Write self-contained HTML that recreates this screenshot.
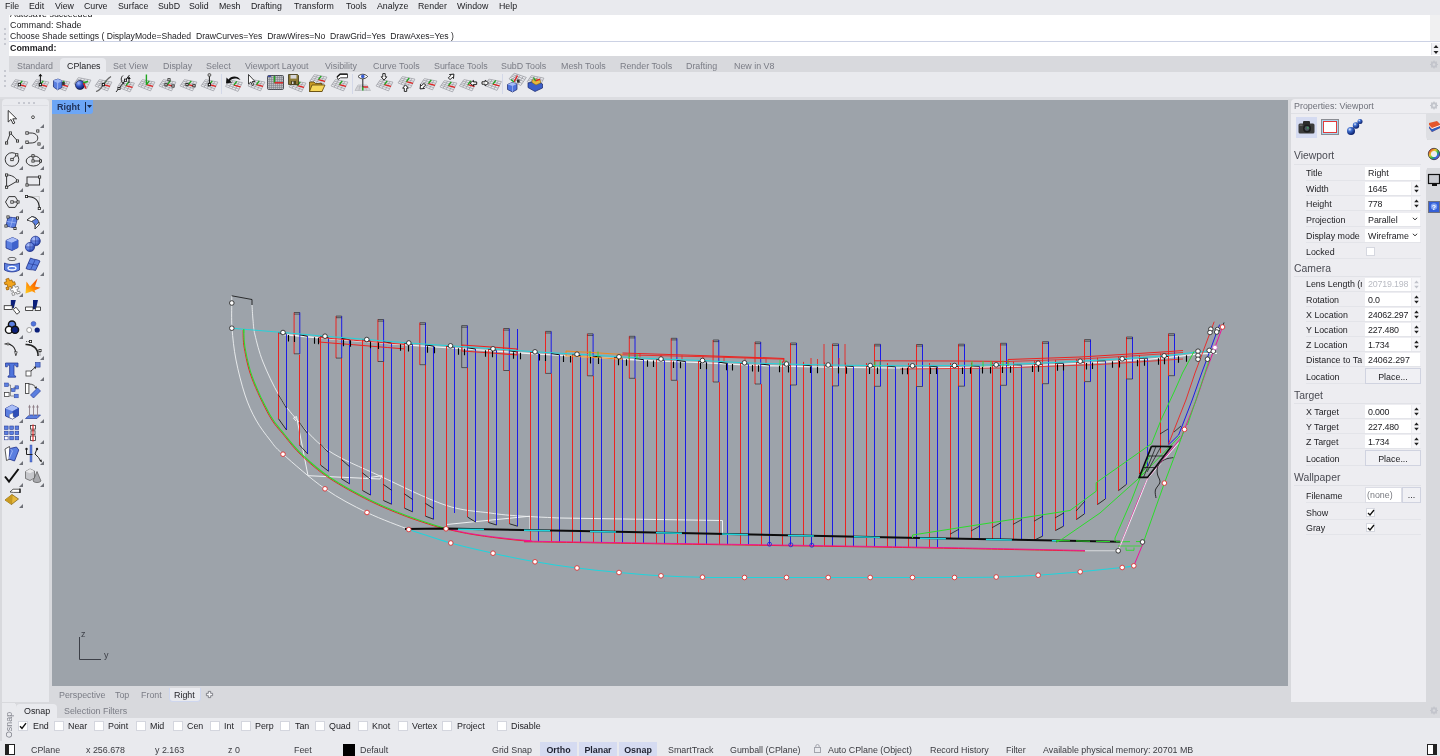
<!DOCTYPE html>
<html><head><meta charset="utf-8"><title>Rhino</title>
<style>
*{box-sizing:border-box;margin:0;padding:0}
html,body{width:1440px;height:756px;overflow:hidden}
body{font-family:"Liberation Sans",sans-serif;font-size:9px;color:#1c1c1f;background:#e9eaee;position:relative}
.a{position:absolute;white-space:nowrap}
.t{position:absolute;white-space:nowrap;line-height:12px;height:12px}
.g{color:#75777f}
.cb{position:absolute;width:10px;height:10px;background:#fff;border:1px solid #d4d6de}
svg{position:absolute;overflow:visible}
</style></head><body>
<div id="wrap" style="position:absolute;left:0;top:0;width:1440px;height:756px;overflow:hidden;will-change:transform">
<!-- menu -->
<div class="a" style="left:0;top:0;width:1440px;height:15px;background:#e9eaee"></div>
<div class="t" style="left:5px;top:0px;font-size:8.8px;color:#1a1a1e;word-spacing:0" id="menu">
<span class="a" style="left:0">File</span><span class="a" style="left:24px">Edit</span><span class="a" style="left:50px">View</span><span class="a" style="left:79px">Curve</span><span class="a" style="left:113px">Surface</span><span class="a" style="left:153px">SubD</span><span class="a" style="left:184px">Solid</span><span class="a" style="left:214px">Mesh</span><span class="a" style="left:246px">Drafting</span><span class="a" style="left:289px">Transform</span><span class="a" style="left:341px">Tools</span><span class="a" style="left:372px">Analyze</span><span class="a" style="left:413px">Render</span><span class="a" style="left:452px">Window</span><span class="a" style="left:494px">Help</span>
</div>
<!-- command area -->
<div class="a" style="left:9px;top:15px;width:1421px;height:27px;background:#fff;overflow:hidden">
 <div class="t" style="left:1px;top:-7px;font-size:8.9px">Autosave succeeded</div>
 <div class="t" style="left:1px;top:4px;font-size:8.9px">Command: Shade</div>
 <div class="t" style="left:1px;top:15px;font-size:8.62px">Choose Shade settings ( DisplayMode=Shaded&nbsp; DrawCurves=Yes&nbsp; DrawWires=No&nbsp; DrawGrid=Yes&nbsp; DrawAxes=Yes )</div>
</div>
<div class="a" style="left:9px;top:41px;width:1431px;height:1px;background:#ccd2e4"></div>
<div class="a" style="left:9px;top:42px;width:1431px;height:14px;background:#fff"></div>
<div class="t" style="left:10px;top:42px;font-size:8.9px;font-weight:bold">Command:</div>
<!-- grip dots -->
<div class="a" style="left:4px;top:28px;width:2px;height:2px;background:#c6c8d0;box-shadow:0 5px 0 #c6c8d0,0 10px 0 #c6c8d0,0 15px 0 #c6c8d0"></div>
<!-- spinner right -->
<div class="a" style="left:1431px;top:43px;width:9px;height:12px;background:#f2f2f5;border-left:1px solid #dcdde3"></div>
<svg style="left:1432px;top:44px" width="8" height="11"><path d="M1.5 4 L4 1 L6.5 4Z M1.5 7 L4 10 L6.5 7Z" fill="#222"/></svg>
<!-- tab bar -->
<div class="a" style="left:9px;top:56px;width:1431px;height:16px;background:#d8d9dd"></div>
<div class="a" style="left:0;top:56px;width:9px;height:42px;background:#e9eaee;border-radius:3px 0 0 3px"></div>
<div class="a" style="left:60px;top:58px;width:46px;height:15px;background:#e9eaee;border-radius:4px 4px 0 0"></div>
<div class="t g" style="left:0;top:60px;font-size:8.9px;color:#7a7c85" id="tabs">
<span class="a" style="left:17px">Standard</span><span class="a" style="left:67px;color:#232327">CPlanes</span><span class="a" style="left:113px">Set View</span><span class="a" style="left:163px">Display</span><span class="a" style="left:206px">Select</span><span class="a" style="left:245px">Viewport Layout</span><span class="a" style="left:325px">Visibility</span><span class="a" style="left:373px">Curve Tools</span><span class="a" style="left:434px">Surface Tools</span><span class="a" style="left:501px">SubD Tools</span><span class="a" style="left:561px">Mesh Tools</span><span class="a" style="left:620px">Render Tools</span><span class="a" style="left:686px">Drafting</span><span class="a" style="left:734px">New in V8</span>
</div>
<div class="a" style="left:4px;top:70px;width:2px;height:2px;background:#c6c8d0;box-shadow:0 5px 0 #c6c8d0,0 10px 0 #c6c8d0,0 15px 0 #c6c8d0"></div>
<!-- toolbar row bg -->
<div class="a" style="left:9px;top:72px;width:1431px;height:26px;background:#e9eaee"></div>
<div class="a" style="left:0;top:97px;width:1440px;height:3px;background:#dcdde1"></div>
<div class="a" style="left:1430px;top:15px;width:10px;height:26px;background:#f0f0f1"></div>
<svg style="left:1429px;top:59px" width="11" height="11" viewBox="0 0 11 11"><circle cx="5" cy="5.5" r="2.4" fill="none" stroke="#c3c5cc" stroke-width="1.6"/><path d="M5 1.5V9.5M1 5.5H9M2.2 2.7L7.8 8.3M7.8 2.7L2.2 8.3" stroke="#c3c5cc" stroke-width="1.2"/><circle cx="5" cy="5.5" r="1.2" fill="#d8d9dd"/></svg>
<svg style="left:11.0px;top:73px" width="18" height="22" viewBox="0 -6 18 22"><path d="M4.4 0.6L0.0 6.9M4.4 0.6L16.9 3.1M7.5 1.2L3.1 8.2M3.3 2.2L15.8 5.3M10.6 1.9L6.2 9.4M2.2 3.8L14.7 7.5M13.8 2.5L9.4 10.7M1.1 5.3L13.6 9.7M16.9 3.1L12.5 11.9M0.0 6.9L12.5 11.9" stroke="#9c9ea4" stroke-width="0.75" fill="none"/><path d="M8.4 5.6L15 7.3" stroke="#e02020" stroke-width="1.3"/><path d="M8.4 5.6L11.3 1.8" stroke="#1fa51f" stroke-width="1.3"/><rect x="7.2" y="4.4" width="2.4" height="2.4" fill="#fff" stroke="#111" stroke-width="0.8"/></svg>
<svg style="left:32.0px;top:73px" width="18" height="22" viewBox="0 -6 18 22"><path d="M4.4 0.6L0.0 6.9M4.4 0.6L16.9 3.1M7.5 1.2L3.1 8.2M3.3 2.2L15.8 5.3M10.6 1.9L6.2 9.4M2.2 3.8L14.7 7.5M13.8 2.5L9.4 10.7M1.1 5.3L13.6 9.7M16.9 3.1L12.5 11.9M0.0 6.9L12.5 11.9" stroke="#9c9ea4" stroke-width="0.75" fill="none"/><path d="M8.4 5.6L15 7.3" stroke="#e02020" stroke-width="1.3"/><path d="M8.4 5.6L11.3 1.8" stroke="#1fa51f" stroke-width="1.3"/><rect x="7.2" y="4.4" width="2.4" height="2.4" fill="#fff" stroke="#111" stroke-width="0.8"/><path d="M8.4 5.6V-3.5" stroke="#111" stroke-width="1"/><path d="M6.4 -2.8L8.4 -5.2L10.4 -2.8Z" fill="#111"/><rect x="7.3" y="4.5" width="2.2" height="2.2" fill="#fff" stroke="#111" stroke-width="0.8"/></svg>
<svg style="left:53.2px;top:73px" width="18" height="22" viewBox="0 -6 18 22"><path d="M4.4 0.6L0.0 6.9M4.4 0.6L16.9 3.1M7.5 1.2L3.1 8.2M3.3 2.2L15.8 5.3M10.6 1.9L6.2 9.4M2.2 3.8L14.7 7.5M13.8 2.5L9.4 10.7M1.1 5.3L13.6 9.7M16.9 3.1L12.5 11.9M0.0 6.9L12.5 11.9" stroke="#9c9ea4" stroke-width="0.75" fill="none"/><path d="M8.4 5.6L15 7.3" stroke="#e02020" stroke-width="1.3"/><path d="M8.4 5.6L11.3 1.8" stroke="#1fa51f" stroke-width="1.3"/><path d="M0.5 1.5L5 0L9 1.8V8.5L4.5 10.8L0.5 8Z" fill="#5b7fe0" stroke="#1b2a70" stroke-width="0.7"/><path d="M0.5 1.5L4.7 3.6L9 1.8M4.7 3.6L4.5 10.8" stroke="#c9d6ff" stroke-width="0.6" fill="none"/><path d="M0.5 1.5L5 0L9 1.8L4.7 3.6Z" fill="#9db6f5"/><rect x="9.3" y="3" width="2.5" height="3" fill="#333"/></svg>
<svg style="left:73.9px;top:73px" width="18" height="22" viewBox="0 -6 18 22"><path d="M4.4 -1.4L0.0 4.9M4.4 -1.4L16.9 1.1M7.5 -0.8L3.1 6.2M3.3 0.2L15.8 3.3M10.6 -0.1L6.2 7.4M2.2 1.8L14.7 5.5M13.8 0.5L9.4 8.7M1.1 3.3L13.6 7.7M16.9 1.1L12.5 9.9M0.0 4.9L12.5 9.9" stroke="#9c9ea4" stroke-width="0.75" fill="none"/><defs><radialGradient id="sp" cx="35%" cy="30%" r="75%"><stop offset="0" stop-color="#9fb8ff"/><stop offset="0.5" stop-color="#2d4fc0"/><stop offset="1" stop-color="#0a1a5a"/></radialGradient></defs><circle cx="6" cy="6" r="4.6" fill="url(#sp)" stroke="#10163a" stroke-width="0.6"/><path d="M9 3.8L14 2.6" stroke="#1fa51f" stroke-width="1.5"/><path d="M9.4 4L12 9.5" stroke="#e02020" stroke-width="1.5"/></svg>
<svg style="left:95.1px;top:73px" width="18" height="22" viewBox="0 -6 18 22"><path d="M4.4 0.6L0.0 6.9M4.4 0.6L16.9 3.1M7.5 1.2L3.1 8.2M3.3 2.2L15.8 5.3M10.6 1.9L6.2 9.4M2.2 3.8L14.7 7.5M13.8 2.5L9.4 10.7M1.1 5.3L13.6 9.7M16.9 3.1L12.5 11.9M0.0 6.9L12.5 11.9" stroke="#9c9ea4" stroke-width="0.75" fill="none"/><path d="M8.4 5.6L15 7.3" stroke="#e02020" stroke-width="1.3"/><path d="M8.4 5.6L11.3 1.8" stroke="#1fa51f" stroke-width="1.3"/><rect x="7.2" y="4.4" width="2.4" height="2.4" fill="#fff" stroke="#111" stroke-width="0.8"/><path d="M1 12.5C8 11 7 3 16 -2.5" stroke="#666" stroke-width="1.1" fill="none"/><rect x="7.3" y="4.5" width="2.2" height="2.2" fill="#fff" stroke="#111" stroke-width="0.8"/></svg>
<svg style="left:116.4px;top:73px" width="18" height="22" viewBox="0 -6 18 22"><path d="M5.9 1.6L1.5 7.9M5.9 1.6L18.4 4.1M9.0 2.2L4.6 9.2M4.8 3.2L17.3 6.3M12.1 2.9L7.8 10.4M3.7 4.8L16.2 8.5M15.3 3.5L10.9 11.7M2.6 6.3L15.1 10.7M18.4 4.1L14.0 12.9M1.5 7.9L14.0 12.9" stroke="#9c9ea4" stroke-width="0.75" fill="none"/><path d="M9.9 6.6L16.5 8.3" stroke="#e02020" stroke-width="1.3"/><path d="M9.9 6.6L12.8 2.8" stroke="#1fa51f" stroke-width="1.3"/><path d="M0 13L13.5 -4" stroke="#111" stroke-width="0.9"/><path d="M7 -3.5C4 -1 5 4 8.5 5" stroke="#111" stroke-width="0.9" fill="none"/><path d="M13 4V-1" stroke="#111" stroke-width="1"/><path d="M11.2 0L13 -2.5L14.8 0Z" fill="#111"/><rect x="8.4" y="0.1" width="2.2" height="2.2" fill="#fff" stroke="#111" stroke-width="0.8"/><rect x="1.9" y="8.4" width="2.2" height="2.2" fill="#fff" stroke="#111" stroke-width="0.8"/></svg>
<svg style="left:137.5px;top:73px" width="18" height="22" viewBox="0 -6 18 22"><path d="M4.4 0.6L0.0 6.9M4.4 0.6L16.9 3.1M7.5 1.2L3.1 8.2M3.3 2.2L15.8 5.3M10.6 1.9L6.2 9.4M2.2 3.8L14.7 7.5M13.8 2.5L9.4 10.7M1.1 5.3L13.6 9.7M16.9 3.1L12.5 11.9M0.0 6.9L12.5 11.9" stroke="#9c9ea4" stroke-width="0.75" fill="none"/><path d="M8.4 5.6L15 7.3" stroke="#e02020" stroke-width="1.3"/><path d="M8.4 5.6L11.3 1.8" stroke="#1fa51f" stroke-width="1.3"/><path d="M8.4 5.6V-4.5" stroke="#1fa51f" stroke-width="1.4"/></svg>
<svg style="left:158.9px;top:73px" width="18" height="22" viewBox="0 -6 18 22"><path d="M4.4 0.6L0.0 6.9M4.4 0.6L16.9 3.1M7.5 1.2L3.1 8.2M3.3 2.2L15.8 5.3M10.6 1.9L6.2 9.4M2.2 3.8L14.7 7.5M13.8 2.5L9.4 10.7M1.1 5.3L13.6 9.7M16.9 3.1L12.5 11.9M0.0 6.9L12.5 11.9" stroke="#9c9ea4" stroke-width="0.75" fill="none"/><path d="M8.4 5.6L15 7.3" stroke="#e02020" stroke-width="1.3"/><path d="M8.4 5.6L11.3 1.8" stroke="#1fa51f" stroke-width="1.3"/><rect x="8.9" y="-0.3" width="2.2" height="2.2" fill="#fff" stroke="#111" stroke-width="0.8"/><rect x="5.9" y="4.7" width="2.2" height="2.2" fill="#fff" stroke="#111" stroke-width="0.8"/><rect x="12.9" y="5.9" width="2.2" height="2.2" fill="#fff" stroke="#111" stroke-width="0.8"/></svg>
<svg style="left:179.5px;top:73px" width="18" height="22" viewBox="0 -6 18 22"><path d="M4.4 0.6L0.0 6.9M4.4 0.6L16.9 3.1M7.5 1.2L3.1 8.2M3.3 2.2L15.8 5.3M10.6 1.9L6.2 9.4M2.2 3.8L14.7 7.5M13.8 2.5L9.4 10.7M1.1 5.3L13.6 9.7M16.9 3.1L12.5 11.9M0.0 6.9L12.5 11.9" stroke="#9c9ea4" stroke-width="0.75" fill="none"/><path d="M8.4 5.6L15 7.3" stroke="#e02020" stroke-width="1.3"/><path d="M8.4 5.6L11.3 1.8" stroke="#1fa51f" stroke-width="1.3"/><rect x="5.9" y="4.5" width="2.2" height="2.2" fill="#fff" stroke="#111" stroke-width="0.8"/><rect x="12.9" y="5.7" width="2.2" height="2.2" fill="#fff" stroke="#111" stroke-width="0.8"/></svg>
<svg style="left:200.9px;top:73px" width="18" height="22" viewBox="0 -6 18 22"><path d="M4.4 0.6L0.0 6.9M4.4 0.6L16.9 3.1M7.5 1.2L3.1 8.2M3.3 2.2L15.8 5.3M10.6 1.9L6.2 9.4M2.2 3.8L14.7 7.5M13.8 2.5L9.4 10.7M1.1 5.3L13.6 9.7M16.9 3.1L12.5 11.9M0.0 6.9L12.5 11.9" stroke="#9c9ea4" stroke-width="0.75" fill="none"/><path d="M8.4 5.6L15 7.3" stroke="#e02020" stroke-width="1.3"/><path d="M8.4 5.6L11.3 1.8" stroke="#1fa51f" stroke-width="1.3"/><rect x="7.2" y="4.4" width="2.4" height="2.4" fill="#fff" stroke="#111" stroke-width="0.8"/><path d="M8.4 5.6V-3" stroke="#111" stroke-width="1"/><circle cx="8.4" cy="-4" r="1.5" fill="#bbb" stroke="#333" stroke-width="0.7"/><rect x="7.3" y="4.5" width="2.2" height="2.2" fill="#fff" stroke="#111" stroke-width="0.8"/></svg>
<div class="a" style="left:221px;top:74px;width:1px;height:20px;background:#d3d8e8"></div>
<svg style="left:225.2px;top:73px" width="18" height="22" viewBox="0 -6 18 22"><path d="M4.9 1.1L0.5 7.4M4.9 1.1L17.4 3.6M8.0 1.7L3.6 8.7M3.8 2.7L16.3 5.8M11.1 2.4L6.8 9.9M2.7 4.2L15.2 8.0M14.3 3.0L9.9 11.2M1.6 5.8L14.1 10.2M17.4 3.6L13.0 12.4M0.5 7.4L13.0 12.4" stroke="#9c9ea4" stroke-width="0.75" fill="none"/><path d="M8.9 6.1L15.5 7.8" stroke="#e02020" stroke-width="1.3"/><path d="M8.9 6.1L11.8 2.3" stroke="#1fa51f" stroke-width="1.3"/><path d="M15.5 1C13 -3.5 6 -3.5 3.5 0.5L1.5 -1.5L1 4.5L7 3.5L5 1.8C7.5 -1.5 12 -1 15.5 1Z" fill="#111"/></svg>
<svg style="left:246.5px;top:73px" width="18" height="22" viewBox="0 -6 18 22"><path d="M5.4 0.6L1.0 6.9M5.4 0.6L17.9 3.1M8.5 1.2L4.1 8.2M4.3 2.2L16.8 5.3M11.6 1.9L7.2 9.4M3.2 3.8L15.7 7.5M14.8 2.5L10.4 10.7M2.1 5.3L14.6 9.7M17.9 3.1L13.5 11.9M1.0 6.9L13.5 11.9" stroke="#9c9ea4" stroke-width="0.75" fill="none"/><path d="M9.4 5.6L16 7.3" stroke="#e02020" stroke-width="1.3"/><path d="M9.4 5.6L12.3 1.8" stroke="#1fa51f" stroke-width="1.3"/><path d="M1.5 -4.5V5L3.8 3L5.4 6.5L6.8 5.8L5.2 2.5H8Z" fill="#fff" stroke="#111" stroke-width="0.8"/></svg>
<svg style="left:267.0px;top:73px" width="18" height="22" viewBox="0 -6 18 22"><rect x="0.5" y="-3.5" width="16" height="14" rx="1.2" fill="#bfc1c6" stroke="#4b4d55" stroke-width="1"/><path d="M2.5 -3.5V10.5M4.5 -3.5V10.5M6.5 -3.5V10.5M8.5 -3.5V10.5M10.5 -3.5V10.5M12.5 -3.5V10.5M14.5 -3.5V10.5M0.5 -1.5H16.5M0.5 0.5H16.5M0.5 2.5H16.5M0.5 4.5H16.5M0.5 6.5H16.5M0.5 8.5H16.5" stroke="#777980" stroke-width="0.5"/><rect x="1" y="-3.2" width="3" height="1" fill="#2233aa"/><path d="M7.5 3.8V-3" stroke="#1fa51f" stroke-width="1.4"/><path d="M7.5 3.8H16" stroke="#e02020" stroke-width="1.4"/></svg>
<svg style="left:287.5px;top:73px" width="18" height="22" viewBox="0 -6 18 22"><path d="M5.4 1.6L1.0 7.9M5.4 1.6L17.9 4.1M8.5 2.2L4.1 9.2M4.3 3.2L16.8 6.3M11.6 2.9L7.2 10.4M3.2 4.8L15.7 8.5M14.8 3.5L10.4 11.7M2.1 6.3L14.6 10.7M17.9 4.1L13.5 12.9M1.0 7.9L13.5 12.9" stroke="#9c9ea4" stroke-width="0.75" fill="none"/><path d="M9.4 6.6L16 8.3" stroke="#e02020" stroke-width="1.3"/><path d="M9.4 6.6L12.3 2.8" stroke="#1fa51f" stroke-width="1.3"/><path d="M0.5 -4.5H9.5L10.5 -3.5V5.5H0.5Z" fill="#8d7a35" stroke="#3a3315" stroke-width="0.8"/><rect x="2.5" y="-4" width="6" height="3.6" fill="#d6d6da"/><rect x="3" y="2" width="5" height="3.5" fill="#4a421c"/><rect x="4" y="2.6" width="1.5" height="2.4" fill="#d6d6da"/></svg>
<svg style="left:309.0px;top:73px" width="18" height="22" viewBox="0 -6 18 22"><path d="M5.4 -4.4L1.0 1.9M5.4 -4.4L17.9 -1.9M8.5 -3.8L4.1 3.2M4.3 -2.8L16.8 0.3M11.6 -3.1L7.2 4.4M3.2 -1.2L15.7 2.5M14.8 -2.5L10.4 5.7M2.1 0.3L14.6 4.7M17.9 -1.9L13.5 6.9M1.0 1.9L13.5 6.9" stroke="#9c9ea4" stroke-width="0.75" fill="none"/><path d="M9.4 0.5999999999999996L16 2.3" stroke="#e02020" stroke-width="1.3"/><path d="M9.4 0.5999999999999996L12.3 -3.2" stroke="#1fa51f" stroke-width="1.3"/><path d="M0.5 3H5L6.5 4.5H13V12.5H0.5Z" fill="#c79b25" stroke="#5a430b" stroke-width="0.8"/><path d="M0.5 12.5L3 6H16L13 12.5Z" fill="#f6d65a" stroke="#5a430b" stroke-width="0.8"/></svg>
<svg style="left:330.5px;top:73px" width="18" height="22" viewBox="0 -6 18 22"><path d="M4.4 0.6L0.0 6.9M4.4 0.6L16.9 3.1M7.5 1.2L3.1 8.2M3.3 2.2L15.8 5.3M10.6 1.9L6.2 9.4M2.2 3.8L14.7 7.5M13.8 2.5L9.4 10.7M1.1 5.3L13.6 9.7M16.9 3.1L12.5 11.9M0.0 6.9L12.5 11.9" stroke="#9c9ea4" stroke-width="0.75" fill="none"/><path d="M8.4 5.6L15 7.3" stroke="#e02020" stroke-width="1.3"/><path d="M8.4 5.6L11.3 1.8" stroke="#1fa51f" stroke-width="1.3"/><path d="M6 -2L9 -4.8H16.5V-1.2H9.5L7 0.5Z" fill="#fff" stroke="#333" stroke-width="0.9"/><path d="M6 -2L9 -4.8H16.5" stroke="#111" stroke-width="1.3" fill="none"/></svg>
<div class="a" style="left:352px;top:74px;width:1px;height:20px;background:#d3d8e8"></div>
<svg style="left:355.1px;top:73px" width="18" height="22" viewBox="0 -6 18 22"><path d="M3.0 6.0L0.0 11.5M3.0 6.0L12.0 6.0M5.2 6.0L3.9 11.5M2.2 7.4L12.9 7.4M7.5 6.0L7.8 11.5M1.5 8.8L13.8 8.8M9.8 6.0L11.6 11.5M0.8 10.1L14.6 10.1M12.0 6.0L15.5 11.5M0.0 11.5L15.5 11.5" stroke="#a9abb0" stroke-width="0.6" fill="none"/><path d="M7.8 8H13" stroke="#e02020" stroke-width="1.4"/><path d="M7.8 8V11.5" stroke="#1fa51f" stroke-width="1.4"/><path d="M7.8 0V8" stroke="#111" stroke-width="0.9"/><path d="M3 -2.5C5.5 -5.5 10 -5.5 12.6 -2.5C10 0.5 5.5 0.5 3 -2.5Z" fill="#fff" stroke="#111" stroke-width="0.8"/><circle cx="7.8" cy="-2.6" r="1.8" fill="#3a5fd0"/></svg>
<svg style="left:376.2px;top:73px" width="18" height="22" viewBox="0 -6 18 22"><path d="M4.4 0.6L0.0 6.9M4.4 0.6L16.9 3.1M7.5 1.2L3.1 8.2M3.3 2.2L15.8 5.3M10.6 1.9L6.2 9.4M2.2 3.8L14.7 7.5M13.8 2.5L9.4 10.7M1.1 5.3L13.6 9.7M16.9 3.1L12.5 11.9M0.0 6.9L12.5 11.9" stroke="#9c9ea4" stroke-width="0.75" fill="none"/><path d="M8.4 5.6L15 7.3" stroke="#e02020" stroke-width="1.3"/><path d="M8.4 5.6L11.3 1.8" stroke="#1fa51f" stroke-width="1.3"/><g transform="translate(8,-2.2) rotate(90)"><path d="M-3.2 -1.2H0V-2.8L3.4 0L0 2.8V1.2H-3.2Z" fill="#fff" stroke="#111" stroke-width="0.9"/></g></svg>
<svg style="left:397.5px;top:73px" width="18" height="22" viewBox="0 -6 18 22"><path d="M4.4 -2.4L0.0 3.9M4.4 -2.4L16.9 0.1M7.5 -1.8L3.1 5.2M3.3 -0.8L15.8 2.3M10.6 -1.1L6.2 6.4M2.2 0.8L14.7 4.5M13.8 -0.5L9.4 7.7M1.1 2.3L13.6 6.7M16.9 0.1L12.5 8.9M0.0 3.9L12.5 8.9" stroke="#9c9ea4" stroke-width="0.75" fill="none"/><path d="M8.4 2.5999999999999996L15 4.3" stroke="#e02020" stroke-width="1.3"/><path d="M8.4 2.5999999999999996L11.3 -1.2" stroke="#1fa51f" stroke-width="1.3"/><g transform="translate(7.5,9.2) rotate(-90)"><path d="M-3.2 -1.2H0V-2.8L3.4 0L0 2.8V1.2H-3.2Z" fill="#fff" stroke="#111" stroke-width="0.9"/></g></svg>
<svg style="left:418.8px;top:73px" width="18" height="22" viewBox="0 -6 18 22"><path d="M5.4 -0.4L1.0 5.9M5.4 -0.4L17.9 2.1M8.5 0.2L4.1 7.2M4.3 1.2L16.8 4.3M11.6 0.9L7.2 8.4M3.2 2.8L15.7 6.5M14.8 1.5L10.4 9.7M2.1 4.3L14.6 8.7M17.9 2.1L13.5 10.9M1.0 5.9L13.5 10.9" stroke="#9c9ea4" stroke-width="0.75" fill="none"/><path d="M9.4 4.6L16 6.3" stroke="#e02020" stroke-width="1.3"/><path d="M9.4 4.6L12.3 0.8" stroke="#1fa51f" stroke-width="1.3"/><g transform="translate(3.5,7.5) rotate(135)"><path d="M-3.2 -1.2H0V-2.8L3.4 0L0 2.8V1.2H-3.2Z" fill="#fff" stroke="#111" stroke-width="0.9"/></g></svg>
<svg style="left:439.5px;top:73px" width="18" height="22" viewBox="0 -6 18 22"><path d="M4.4 1.6L0.0 7.9M4.4 1.6L16.9 4.1M7.5 2.2L3.1 9.2M3.3 3.2L15.8 6.3M10.6 2.9L6.2 10.4M2.2 4.8L14.7 8.5M13.8 3.5L9.4 11.7M1.1 6.3L13.6 10.7M16.9 4.1L12.5 12.9M0.0 7.9L12.5 12.9" stroke="#9c9ea4" stroke-width="0.75" fill="none"/><path d="M8.4 6.6L15 8.3" stroke="#e02020" stroke-width="1.3"/><path d="M8.4 6.6L11.3 2.8" stroke="#1fa51f" stroke-width="1.3"/><g transform="translate(11.5,-2.5) rotate(-45)"><path d="M-3.2 -1.2H0V-2.8L3.4 0L0 2.8V1.2H-3.2Z" fill="#fff" stroke="#111" stroke-width="0.9"/></g></svg>
<svg style="left:460.5px;top:73px" width="18" height="22" viewBox="0 -6 18 22"><path d="M2.9 0.6L-1.5 6.9M2.9 0.6L15.4 3.1M6.0 1.2L1.6 8.2M1.8 2.2L14.3 5.3M9.1 1.9L4.8 9.4M0.7 3.8L13.2 7.5M12.3 2.5L7.9 10.7M-0.4 5.3L12.1 9.7M15.4 3.1L11.0 11.9M-1.5 6.9L11.0 11.9" stroke="#9c9ea4" stroke-width="0.75" fill="none"/><path d="M6.9 5.6L13.5 7.3" stroke="#e02020" stroke-width="1.3"/><path d="M6.9 5.6L9.8 1.8" stroke="#1fa51f" stroke-width="1.3"/><g transform="translate(12.5,4.2) rotate(180)"><path d="M-3.2 -1.2H0V-2.8L3.4 0L0 2.8V1.2H-3.2Z" fill="#fff" stroke="#111" stroke-width="0.9"/></g></svg>
<svg style="left:481.5px;top:73px" width="18" height="22" viewBox="0 -6 18 22"><path d="M6.9 0.1L2.5 6.4M6.9 0.1L19.4 2.6M10.0 0.7L5.6 7.7M5.8 1.7L18.3 4.8M13.1 1.4L8.8 8.9M4.7 3.3L17.2 7.0M16.3 2.0L11.9 10.2M3.6 4.8L16.1 9.2M19.4 2.6L15.0 11.4M2.5 6.4L15.0 11.4" stroke="#9c9ea4" stroke-width="0.75" fill="none"/><path d="M10.9 5.1L17.5 6.8" stroke="#e02020" stroke-width="1.3"/><path d="M10.9 5.1L13.8 1.3" stroke="#1fa51f" stroke-width="1.3"/><g transform="translate(3.2,4) rotate(0)"><path d="M-3.2 -1.2H0V-2.8L3.4 0L0 2.8V1.2H-3.2Z" fill="#fff" stroke="#111" stroke-width="0.9"/></g></svg>
<div class="a" style="left:502px;top:74px;width:1px;height:20px;background:#d3d8e8"></div>
<svg style="left:506.3px;top:73px" width="18" height="22" viewBox="0 -6 18 22"><g transform="translate(4,-7) rotate(8)"><path d="M4.4 0.6L0.0 6.9M4.4 0.6L16.9 3.1M7.5 1.2L3.1 8.2M3.3 2.2L15.8 5.3M10.6 1.9L6.2 9.4M2.2 3.8L14.7 7.5M13.8 2.5L9.4 10.7M1.1 5.3L13.6 9.7M16.9 3.1L12.5 11.9M0.0 6.9L12.5 11.9" stroke="#9c9ea4" stroke-width="0.75" fill="none"/></g><path d="M8 3L11.5 -3.5" stroke="#e02020" stroke-width="1.4"/><path d="M8 3L5 0.5" stroke="#1fa51f" stroke-width="1.4"/><rect x="11" y="0.5" width="2.6" height="3.2" fill="#333"/><path d="M1.5 5.5L6 3.5L11 5V10.5L6.5 13L1.5 10.5Z" fill="#4f74dc" stroke="#18256a" stroke-width="0.7"/><path d="M1.5 5.5L6 3.5L11 5L6.5 7Z" fill="#a6bcf7"/><path d="M6.5 7V13" stroke="#c9d6ff" stroke-width="0.5"/></svg>
<svg style="left:526.7px;top:73px" width="18" height="22" viewBox="0 -6 18 22"><g transform="translate(0,-4)"><path d="M4.4 0.6L0.0 6.9M4.4 0.6L16.9 3.1M7.5 1.2L3.1 8.2M3.3 2.2L15.8 5.3M10.6 1.9L6.2 9.4M2.2 3.8L14.7 7.5M13.8 2.5L9.4 10.7M1.1 5.3L13.6 9.7M16.9 3.1L12.5 11.9M0.0 6.9L12.5 11.9" stroke="#9c9ea4" stroke-width="0.75" fill="none"/></g><path d="M1 4L9 2L15.5 5V9L8 12.5L1 8.5Z" fill="#3b5fc8" stroke="#18256a" stroke-width="0.7"/><path d="M5 1L10 0L13.5 1.5V4L9 6L5 3.5Z" fill="#e8b93c" stroke="#7a5a10" stroke-width="0.5"/><path d="M8.5 2L13 0.2" stroke="#e02020" stroke-width="1.3"/><path d="M8.5 2L6.5 -1.5" stroke="#1fa51f" stroke-width="1.3"/></svg>
<div class="a" style="left:0;top:99px;width:52px;height:604px;background:#d8d9dd"></div>
<div class="a" style="left:2px;top:99px;width:47px;height:603px;background:#e9eaee;border-radius:4px 4px 0 0"></div>
<div class="a" style="left:18px;top:102px;width:2px;height:2px;background:#c6c8d0;box-shadow:5px 0 0 #c6c8d0,10px 0 0 #c6c8d0,15px 0 0 #c6c8d0"></div>
<div class="a" style="left:3px;top:105px;width:45px;height:1px;background:#dddee3"></div>
<svg style="left:1.9px;top:107.3px" width="20" height="20" viewBox="-10 -10 20 20"><path d="M-3.8 -6.5V5L-1 2.4L1 6.8L2.8 6L0.8 1.8H4.6Z" fill="#fff" stroke="#222" stroke-width="0.9"/></svg>
<svg style="left:22.9px;top:107.3px" width="20" height="20" viewBox="-10 -10 20 20"><circle cx="0" cy="0.2" r="1.4" fill="#fff" stroke="#222" stroke-width="0.8"/></svg>
<svg style="left:39.9px;top:124.3px" width="4" height="4"><path d="M4 0V4H0Z" fill="#6f7178"/></svg>
<svg style="left:1.9px;top:128.4px" width="20" height="20" viewBox="-10 -10 20 20"><path d="M-5.4 5L-1.6 -5L5.5 3" stroke="#222" stroke-width="0.9" fill="none"/><rect x="-6.5" y="3.9" width="2.2" height="2.2" fill="#fff" stroke="#222" stroke-width="0.8"/><rect x="-2.7" y="-6.1" width="2.2" height="2.2" fill="#fff" stroke="#222" stroke-width="0.8"/><rect x="4.4" y="1.9" width="2.2" height="2.2" fill="#fff" stroke="#222" stroke-width="0.8"/></svg>
<svg style="left:18.9px;top:145.4px" width="4" height="4"><path d="M4 0V4H0Z" fill="#6f7178"/></svg>
<svg style="left:22.9px;top:128.4px" width="20" height="20" viewBox="-10 -10 20 20"><path d="M-6 -5H-2C7 -5 7 5 -2 5H-6" stroke="#222" stroke-width="0.9" fill="none"/><rect x="-7.2" y="-6.2" width="2.4" height="2.4" fill="#fff" stroke="#222" stroke-width="0.8"/><rect x="-7.2" y="3.0" width="2.4" height="2.4" fill="#fff" stroke="#222" stroke-width="0.8"/><rect x="3.7" y="-8.1" width="2.2" height="2.2" fill="#fff" stroke="#222" stroke-width="0.8"/><rect x="4.9" y="4.9" width="2.2" height="2.2" fill="#fff" stroke="#222" stroke-width="0.8"/></svg>
<svg style="left:39.9px;top:145.4px" width="4" height="4"><path d="M4 0V4H0Z" fill="#6f7178"/></svg>
<svg style="left:1.9px;top:149.4px" width="20" height="20" viewBox="-10 -10 20 20"><circle cx="0" cy="0.5" r="6.8" stroke="#222" stroke-width="0.9" fill="none"/><path d="M0 0.5L4.8 -4.2" stroke="#222" stroke-width="0.9" fill="none"/><rect x="-1.2" y="-0.7" width="2.4" height="2.4" fill="#fff" stroke="#222" stroke-width="0.8"/><rect x="3.7" y="-5.3" width="2.2" height="2.2" fill="#fff" stroke="#222" stroke-width="0.8"/></svg>
<svg style="left:18.9px;top:166.4px" width="4" height="4"><path d="M4 0V4H0Z" fill="#6f7178"/></svg>
<svg style="left:22.9px;top:149.4px" width="20" height="20" viewBox="-10 -10 20 20"><ellipse cx="0.5" cy="2" rx="7.3" ry="5" stroke="#222" stroke-width="0.9" fill="none"/><path d="M0 -3V2H7.5" stroke="#222" stroke-width="0.9" fill="none"/><rect x="-1.1" y="-4.3" width="2.2" height="2.2" fill="#fff" stroke="#222" stroke-width="0.8"/><rect x="-1.1" y="0.9" width="2.2" height="2.2" fill="#fff" stroke="#222" stroke-width="0.8"/><rect x="6.4" y="0.9" width="2.2" height="2.2" fill="#fff" stroke="#222" stroke-width="0.8"/></svg>
<svg style="left:39.9px;top:166.4px" width="4" height="4"><path d="M4 0V4H0Z" fill="#6f7178"/></svg>
<svg style="left:1.9px;top:170.5px" width="20" height="20" viewBox="-10 -10 20 20"><path d="M-5.4 -6V6.2L5.4 0C3.5 -4 -1 -6.2 -5.4 -6Z" stroke="#222" stroke-width="0.9" fill="none"/><rect x="-6.5" y="-7.1" width="2.2" height="2.2" fill="#fff" stroke="#222" stroke-width="0.8"/><rect x="-6.5" y="5.1" width="2.2" height="2.2" fill="#fff" stroke="#222" stroke-width="0.8"/><rect x="4.3" y="-1.1" width="2.2" height="2.2" fill="#fff" stroke="#222" stroke-width="0.8"/></svg>
<svg style="left:18.9px;top:187.5px" width="4" height="4"><path d="M4 0V4H0Z" fill="#6f7178"/></svg>
<svg style="left:22.9px;top:170.5px" width="20" height="20" viewBox="-10 -10 20 20"><rect x="-6" y="-4" width="12.6" height="8" stroke="#222" stroke-width="0.9" fill="none"/><rect x="-7.1" y="2.9" width="2.2" height="2.2" fill="#fff" stroke="#222" stroke-width="0.8"/><rect x="5.5" y="-5.1" width="2.2" height="2.2" fill="#fff" stroke="#222" stroke-width="0.8"/></svg>
<svg style="left:39.9px;top:187.5px" width="4" height="4"><path d="M4 0V4H0Z" fill="#6f7178"/></svg>
<svg style="left:1.9px;top:191.6px" width="20" height="20" viewBox="-10 -10 20 20"><path d="M-6.5 0L-3.2 -5.4H3.2L6.5 0L3.2 5.4H-3.2Z" stroke="#222" stroke-width="0.9" fill="none"/><path d="M0 0H6" stroke="#222" stroke-width="0.9" fill="none"/><rect x="-1.2" y="-1.2" width="2.4" height="2.4" fill="#fff" stroke="#222" stroke-width="0.8"/><rect x="4.9" y="-1.1" width="2.2" height="2.2" fill="#fff" stroke="#222" stroke-width="0.8"/></svg>
<svg style="left:18.9px;top:208.6px" width="4" height="4"><path d="M4 0V4H0Z" fill="#6f7178"/></svg>
<svg style="left:22.9px;top:191.6px" width="20" height="20" viewBox="-10 -10 20 20"><path d="M-6.5 -5.5H6.3V6.5" stroke="#bbb" stroke-width="0.7" fill="none"/><path d="M-6.5 -5.5C2 -5.5 6.3 -2 6.3 6.5" stroke="#222" stroke-width="1.2" fill="none"/><rect x="-7.6" y="-6.6" width="2.2" height="2.2" fill="#fff" stroke="#222" stroke-width="0.8"/><rect x="5.2" y="5.4" width="2.2" height="2.2" fill="#fff" stroke="#222" stroke-width="0.8"/></svg>
<svg style="left:39.9px;top:208.6px" width="4" height="4"><path d="M4 0V4H0Z" fill="#6f7178"/></svg>
<svg style="left:1.9px;top:212.6px" width="20" height="20" viewBox="-10 -10 20 20"><path d="M-4 -6L5.5 -5L3 5L-6 3Z" fill="#5b7fe0" stroke="#1d2f8a" stroke-width="0.8"/><path d="M1 -5.5L-1.5 4M-5 -1.5L4.3 0" stroke="#a9bdf6" stroke-width="0.7"/><rect x="-5.1" y="-7.1" width="2.2" height="2.2" fill="#fff" stroke="#222" stroke-width="0.8"/><rect x="4.4" y="-6.1" width="2.2" height="2.2" fill="#fff" stroke="#222" stroke-width="0.8"/><rect x="1.9" y="4.4" width="2.2" height="2.2" fill="#fff" stroke="#222" stroke-width="0.8"/><rect x="-7.1" y="1.9" width="2.2" height="2.2" fill="#fff" stroke="#222" stroke-width="0.8"/></svg>
<svg style="left:18.9px;top:229.6px" width="4" height="4"><path d="M4 0V4H0Z" fill="#6f7178"/></svg>
<svg style="left:22.9px;top:212.6px" width="20" height="20" viewBox="-10 -10 20 20"><path d="M-6 -3L-1 -6.5C3 -6 6.5 -3 6 2L2 6C3 1 -1 -3 -6 -3Z" fill="#5b7fe0" stroke="#222" stroke-width="0.8"/><path d="M-6 -3L-1 -6.5L3.5 -4.5L-1.5 -1.5Z" fill="#fff" stroke="#222" stroke-width="0.7"/><path d="M2 6L6 2V-1L2.5 2.5Z" fill="#fff" stroke="#222" stroke-width="0.7"/></svg>
<svg style="left:39.9px;top:229.6px" width="4" height="4"><path d="M4 0V4H0Z" fill="#6f7178"/></svg>
<svg style="left:1.9px;top:233.7px" width="20" height="20" viewBox="-10 -10 20 20"><path d="M-6 -3.5L0.5 -6.5L6 -4V3.5L0 6.5L-6 4Z" fill="#5b7fe0" stroke="#1d2f8a" stroke-width="0.8"/><path d="M-6 -3.5L0.5 -6.5L6 -4L0 -1.2Z" fill="#a9bdf6"/><path d="M0 -1.2V6.5L6 3.5V-4Z" fill="#3f62cc"/></svg>
<svg style="left:18.9px;top:250.7px" width="4" height="4"><path d="M4 0V4H0Z" fill="#6f7178"/></svg>
<svg style="left:22.9px;top:233.7px" width="20" height="20" viewBox="-10 -10 20 20"><defs><radialGradient id="sb" cx="35%" cy="30%" r="80%"><stop offset="0" stop-color="#b8c8fb"/><stop offset="0.6" stop-color="#5072d8"/><stop offset="1" stop-color="#1d2f8a"/></radialGradient></defs><circle cx="2.5" cy="-3" r="4.8" fill="url(#sb)" stroke="#1d2f8a" stroke-width="0.7"/><circle cx="-3" cy="3" r="4.6" fill="url(#sb)" stroke="#1d2f8a" stroke-width="0.7"/><path d="M2.5 -7.8V1.8M-2.3 -3H7.3M-3 -1.6V7.6M-7.6 3H1.6" stroke="#1d2f8a" stroke-width="0.5"/></svg>
<svg style="left:39.9px;top:250.7px" width="4" height="4"><path d="M4 0V4H0Z" fill="#6f7178"/></svg>
<svg style="left:1.9px;top:254.8px" width="20" height="20" viewBox="-10 -10 20 20"><ellipse cx="0" cy="-6" rx="4.2" ry="1.6" fill="#e9eaee" stroke="#444" stroke-width="0.8"/><path d="M-7.5 -2C-3 0 3 0 7.5 -2V5C3 7.5 -3 7.5 -7.5 5Z" fill="#5b7fe0" stroke="#1d2f8a" stroke-width="0.8"/><ellipse cx="0" cy="3.2" rx="4" ry="1.8" fill="none" stroke="#fff" stroke-width="1.3"/></svg>
<svg style="left:18.9px;top:271.8px" width="4" height="4"><path d="M4 0V4H0Z" fill="#6f7178"/></svg>
<svg style="left:22.9px;top:254.8px" width="20" height="20" viewBox="-10 -10 20 20"><path d="M-2.5 -7C1 -5 4 -6 7 -4L2.5 5.5C-1 4 -4 5.5 -7 3.5Z" fill="#5b7fe0" stroke="#1d2f8a" stroke-width="0.8"/><path d="M2.2 -5.4L-2.3 4.5M-4.8 -1.8C-1 0 2 -1 4.8 0.7" stroke="#1d2f8a" stroke-width="0.6" fill="none"/></svg>
<svg style="left:39.9px;top:271.8px" width="4" height="4"><path d="M4 0V4H0Z" fill="#6f7178"/></svg>
<svg style="left:1.9px;top:275.9px" width="20" height="20" viewBox="-10 -10 20 20"><path d="M-7 -5H-4.5V-7.5H-1.5V-5H1V-2.5H3V0.5H1V3H-2V1H-4.5V3H-7V0.5H-5V-2.5H-7Z" fill="#f2a51e" stroke="#9a5a00" stroke-width="0.7" transform="rotate(-18 -3 -2)"/><path d="M-1 1.5H1.5V-0.5H4V1.5H7V4H5V6.5H7V8.5H3.5V6.5H1.5V8.5H-1V6H1V4H-1Z" fill="#fff" stroke="#777" stroke-width="0.7" transform="rotate(-18 3 4)"/></svg>
<svg style="left:18.9px;top:292.9px" width="4" height="4"><path d="M4 0V4H0Z" fill="#6f7178"/></svg>
<svg style="left:22.9px;top:275.9px" width="20" height="20" viewBox="-10 -10 20 20"><defs><linearGradient id="ex" x1="0" y1="1" x2="1" y2="0"><stop offset="0" stop-color="#ffd21f"/><stop offset="0.5" stop-color="#ff7a00"/><stop offset="1" stop-color="#e63a00"/></linearGradient></defs><path d="M-7.5 7.5L-6.5 -4.5L-3 0.5L4.5 -7.5L2 0.5L7.5 1.8L1.5 4.5L2.5 7L-1 5.2Z" fill="url(#ex)"/></svg>
<svg style="left:1.9px;top:296.9px" width="20" height="20" viewBox="-10 -10 20 20"><path d="M-1.2 -7H3.8L1.8 1H-1.2Z" fill="#0b1f7a"/><rect x="-7.8" y="-1.3" width="8" height="3.8" fill="#fff" stroke="#222" stroke-width="0.8"/><path d="M1.2 2.5L4 0.2L7.8 5L4.8 7.2Z" fill="#fff" stroke="#222" stroke-width="0.8"/></svg>
<svg style="left:22.9px;top:296.9px" width="20" height="20" viewBox="-10 -10 20 20"><path d="M0 -7H5L3 2H0Z" fill="#0b1f7a"/><path d="M-7.5 0H0V3.5H-7.5ZM3 0H7.5V3.5H2Z" fill="#fff" stroke="#222" stroke-width="0.8"/></svg>
<svg style="left:1.9px;top:318.0px" width="20" height="20" viewBox="-10 -10 20 20"><circle cx="0" cy="-3.4" r="3.6" fill="#5b7fe0" stroke="#111" stroke-width="1.4"/><circle cx="-3" cy="1.8" r="3.6" fill="#fff" stroke="#111" stroke-width="1.4"/><circle cx="3" cy="1.8" r="3.6" fill="#0b1f7a" stroke="#111" stroke-width="1.4"/></svg>
<svg style="left:18.9px;top:335.0px" width="4" height="4"><path d="M4 0V4H0Z" fill="#6f7178"/></svg>
<svg style="left:22.9px;top:318.0px" width="20" height="20" viewBox="-10 -10 20 20"><circle cx="0.5" cy="-4.2" r="2.4" fill="#4f74dc" stroke="#2a3f9a" stroke-width="0.5"/><circle cx="-3.8" cy="2" r="2.5" fill="#fff" stroke="#666" stroke-width="0.6"/><circle cx="4.2" cy="2" r="2.6" fill="#0b1f7a"/></svg>
<svg style="left:1.9px;top:339.1px" width="20" height="20" viewBox="-10 -10 20 20"><path d="M-7.5 -5C-1 -6 4 -2 3.8 6" stroke="#222" stroke-width="1.1" fill="none"/><circle cx="-4" cy="-5" r="1.1" fill="#fff" stroke="#222" stroke-width="0.7"/><path d="M2.6 2.5L3.8 6.8L5.2 2.8Z" fill="#fff" stroke="#222" stroke-width="0.7"/></svg>
<svg style="left:22.9px;top:339.1px" width="20" height="20" viewBox="-10 -10 20 20"><path d="M-7.5 -4.5C0 -5 5.5 0 5 7" stroke="#222" stroke-width="1.6" fill="none"/><path d="M-7 -7.5H-3M7 1V6.5" stroke="#222" stroke-width="0.7" stroke-dasharray="1.2 1"/><rect x="-3.6" y="-8.6" width="2.2" height="2.2" fill="#fff" stroke="#222" stroke-width="0.8"/><rect x="5.9" y="0.4" width="2.2" height="2.2" fill="#fff" stroke="#222" stroke-width="0.8"/></svg>
<svg style="left:39.9px;top:356.1px" width="4" height="4"><path d="M4 0V4H0Z" fill="#6f7178"/></svg>
<svg style="left:1.9px;top:360.1px" width="20" height="20" viewBox="-10 -10 20 20"><path d="M-6.5 -7H6V-3.2H4.2C4 -4.6 3.4 -5 2 -5V4.6C2 5.6 2.6 5.8 3.6 6V7.2H-4V6C-3 5.8 -2.4 5.6 -2.4 4.6V-5C-3.8 -5 -4.5 -4.6 -4.8 -3.2H-6.5Z" fill="#4f74dc" stroke="#1d2f8a" stroke-width="0.7"/></svg>
<svg style="left:22.9px;top:360.1px" width="20" height="20" viewBox="-10 -10 20 20"><rect x="2.5" y="-7.5" width="4.6" height="4.6" fill="#5b7fe0" stroke="#2a3f9a" stroke-width="0.6"/><rect x="-7" y="1" width="5" height="5" fill="#fff" stroke="#444" stroke-width="0.8"/><path d="M-2 1L2.5 -3" stroke="#222" stroke-width="0.9"/><path d="M0.5 -3.2H2.8V-0.8Z" fill="#222"/></svg>
<svg style="left:39.9px;top:377.1px" width="4" height="4"><path d="M4 0V4H0Z" fill="#6f7178"/></svg>
<svg style="left:1.9px;top:381.2px" width="20" height="20" viewBox="-10 -10 20 20"><rect x="-7.5" y="-8" width="4" height="3.6" fill="#5b7fe0" stroke="#2a3f9a" stroke-width="0.5"/><rect x="-7.5" y="1.5" width="4.6" height="4" fill="#fff" stroke="#444" stroke-width="0.8"/><rect x="-0.5" y="-2.5" width="3.6" height="3.2" fill="#5b7fe0" stroke="#2a3f9a" stroke-width="0.5"/><rect x="3" y="-5.2" width="3.6" height="3.2" fill="#5b7fe0" stroke="#2a3f9a" stroke-width="0.5"/><rect x="2.2" y="3.2" width="4" height="3.6" fill="#5b7fe0" stroke="#2a3f9a" stroke-width="0.5"/><path d="M-3.5 -6H-1.5V5H2M-1.5 -1H-0.5M3.5 -3.5H1.5" stroke="#555" stroke-width="0.6" fill="none"/></svg>
<svg style="left:22.9px;top:381.2px" width="20" height="20" viewBox="-10 -10 20 20"><rect x="-7.5" y="-7.5" width="3.4" height="10" fill="#fff" stroke="#333" stroke-width="0.8"/><path d="M-4 -7C0 -7 2.5 -5 3 -2.5" stroke="#222" stroke-width="0.8" fill="none"/><path d="M1.2 -3.8L3.4 -1.8L4 -4.6Z" fill="#222"/><path d="M-2.5 4L4.5 -3L7.5 0L0.5 7Z" fill="#5b7fe0" stroke="#2a3f9a" stroke-width="0.7"/></svg>
<svg style="left:1.9px;top:402.3px" width="20" height="20" viewBox="-10 -10 20 20"><path d="M-6.5 -3.5L0 -7L6.5 -4V3.5L0.5 7L-6.5 4Z" fill="#5b7fe0" stroke="#1d2f8a" stroke-width="0.8"/><path d="M-6.5 -3.5L0 -7L6.5 -4L0.5 -0.8Z" fill="#a9bdf6"/><path d="M0.5 -0.8V7L6.5 3.5V-4Z" fill="#2f4fb8"/><path d="M-2.5 2.5L1 1V4.5L2.8 5.5L0.5 7L-2.5 5.5Z" fill="#fff" stroke="#777" stroke-width="0.4"/></svg>
<svg style="left:18.9px;top:419.3px" width="4" height="4"><path d="M4 0V4H0Z" fill="#6f7178"/></svg>
<svg style="left:22.9px;top:402.3px" width="20" height="20" viewBox="-10 -10 20 20"><path d="M-7.5 6.5L-3.5 3H7.5L4 6.5Z" fill="#5b7fe0" stroke="#2a3f9a" stroke-width="0.7"/><path d="M-3.5 4V-5M0.5 4V-5M4.5 4V-5" stroke="#8f8088" stroke-width="0.9"/><path d="M-4.8 -4.5L-3.5 -7.5L-2.2 -4.5ZM-0.8 -4.5L0.5 -7.5L1.8 -4.5ZM3.2 -4.5L4.5 -7.5L5.8 -4.5Z" fill="#8f8088"/></svg>
<svg style="left:39.9px;top:419.3px" width="4" height="4"><path d="M4 0V4H0Z" fill="#6f7178"/></svg>
<svg style="left:1.9px;top:423.4px" width="20" height="20" viewBox="-10 -10 20 20"><rect x="-7.5" y="-7.0" width="3.6" height="3.4" fill="#5b7fe0" stroke="#2a3f9a" stroke-width="0.6"/><rect x="-2.2" y="-7.0" width="3.6" height="3.4" fill="#5b7fe0" stroke="#2a3f9a" stroke-width="0.6"/><rect x="3.1" y="-7.0" width="3.6" height="3.4" fill="#5b7fe0" stroke="#2a3f9a" stroke-width="0.6"/><rect x="-7.5" y="-1.8" width="3.6" height="3.4" fill="#5b7fe0" stroke="#2a3f9a" stroke-width="0.6"/><rect x="-2.2" y="-1.8" width="3.6" height="3.4" fill="#5b7fe0" stroke="#2a3f9a" stroke-width="0.6"/><rect x="3.1" y="-1.8" width="3.6" height="3.4" fill="#5b7fe0" stroke="#2a3f9a" stroke-width="0.6"/><rect x="-7.5" y="3.4" width="3.6" height="3.4" fill="#fff" stroke="#2a3f9a" stroke-width="0.6"/><rect x="-2.2" y="3.4" width="3.6" height="3.4" fill="#5b7fe0" stroke="#2a3f9a" stroke-width="0.6"/><rect x="3.1" y="3.4" width="3.6" height="3.4" fill="#5b7fe0" stroke="#2a3f9a" stroke-width="0.6"/></svg>
<svg style="left:18.9px;top:440.4px" width="4" height="4"><path d="M4 0V4H0Z" fill="#6f7178"/></svg>
<svg style="left:22.9px;top:423.4px" width="20" height="20" viewBox="-10 -10 20 20"><rect x="-2.5" y="-7.5" width="5" height="3.6" fill="#fff" stroke="#333" stroke-width="0.8"/><rect x="-2" y="-2.2" width="4" height="3.6" fill="#fff" stroke="#333" stroke-width="0.8"/><rect x="-2.5" y="3" width="5" height="4.4" fill="#fff" stroke="#333" stroke-width="0.8"/><path d="M0 -8.5V8.5" stroke="#e02020" stroke-width="1.1"/></svg>
<svg style="left:39.9px;top:440.4px" width="4" height="4"><path d="M4 0V4H0Z" fill="#6f7178"/></svg>
<svg style="left:1.9px;top:444.4px" width="20" height="20" viewBox="-10 -10 20 20"><path d="M-7 -5L-2.5 -7.5L-1 4.5L-5.5 6.5Z" fill="#fff" stroke="#333" stroke-width="0.8"/><path d="M-2 -5.5L4.5 -7L6.8 -4L2.5 7L-3 5Z" fill="#5b7fe0" stroke="#1d2f8a" stroke-width="0.8"/><path d="M-2 -5.5L0.5 -3L-3 5" stroke="#c9d6ff" stroke-width="0.6" fill="none"/></svg>
<svg style="left:18.9px;top:461.4px" width="4" height="4"><path d="M4 0V4H0Z" fill="#6f7178"/></svg>
<svg style="left:22.9px;top:444.4px" width="20" height="20" viewBox="-10 -10 20 20"><rect x="-3" y="-9" width="2" height="17" fill="#5b7fe0" stroke="#2a3f9a" stroke-width="0.4"/><path d="M-6.5 -4V0.5H-0.5M3.5 -4L2 0L5.5 3.5L8 7.5" stroke="#222" stroke-width="1" fill="none"/><circle cx="-6.5" cy="-5" r="1.2" fill="#222"/><circle cx="4" cy="-5" r="1.2" fill="#222"/><path d="M6.3 6.5L8.8 8.6L8.6 5.4Z" fill="#222"/></svg>
<svg style="left:39.9px;top:461.4px" width="4" height="4"><path d="M4 0V4H0Z" fill="#6f7178"/></svg>
<svg style="left:1.9px;top:465.5px" width="20" height="20" viewBox="-10 -10 20 20"><path d="M-7 0.5L-3 5.5L6.5 -7" stroke="#111" stroke-width="2" fill="none"/></svg>
<svg style="left:18.9px;top:482.5px" width="4" height="4"><path d="M4 0V4H0Z" fill="#6f7178"/></svg>
<svg style="left:22.9px;top:465.5px" width="20" height="20" viewBox="-10 -10 20 20"><path d="M-7.5 -4.5L-3 -7L1.5 -5V2L-3 4.5L-7.5 2.5Z" fill="#c6c7cb" stroke="#555" stroke-width="0.7"/><path d="M-7.5 -4.5L-3 -7L1.5 -5L-3 -2.8Z" fill="#e8e8ea"/><path d="M4 -4.5L8 5C6.5 7 1.5 7 0 5Z" fill="#a8a9ad" stroke="#555" stroke-width="0.7"/></svg>
<svg style="left:39.9px;top:482.5px" width="4" height="4"><path d="M4 0V4H0Z" fill="#6f7178"/></svg>
<svg style="left:1.9px;top:486.6px" width="20" height="20" viewBox="-10 -10 20 20"><path d="M-7 3L0 -2.5L6.5 2L-0.5 7.5Z" fill="#e8b93c" stroke="#7a5a10" stroke-width="0.7"/><path d="M0 -2.5L-0.5 7.5" stroke="#7a5a10" stroke-width="0.5"/><path d="M-7 3L0 -2.5L-0.5 7.5Z" fill="#c99a20"/><path d="M-2 -5L1 -7.8H8V-4.6H1.5Z" fill="#fff" stroke="#333" stroke-width="0.8"/><path d="M8 -8.5V-4" stroke="#111" stroke-width="1.2"/></svg>
<svg style="left:18.9px;top:503.6px" width="4" height="4"><path d="M4 0V4H0Z" fill="#6f7178"/></svg>
<div class="a" style="left:52px;top:100px;width:1236px;height:586px;background:#9da3aa;overflow:hidden" id="vp">
<div class="a" style="left:0;top:0;width:41px;height:14px;background:#6ca6f6;border-radius:0 0 3px 0"></div>
<div class="t" style="left:5px;top:1px;font-size:9px;font-weight:bold;color:#22335a">Right</div>
<div class="a" style="left:33px;top:2px;width:1px;height:10px;background:#1b2a4a"></div>
<svg style="left:35px;top:5px" width="6" height="4"><path d="M0 0H5L2.5 3Z" fill="#1b2a4a"/></svg>
<svg style="left:0;top:0" width="1236" height="586" viewBox="52 100 1236 586">
<path d="M231.8 296.0C231.8 297.2 231.7 297.7 231.8 303.0C231.8 308.3 231.3 318.5 232.0 328.0C232.7 337.5 233.8 348.8 236.0 360.0C238.2 371.2 241.7 385.0 245.0 395.0C248.3 405.0 251.8 412.5 256.0 420.0C260.2 427.5 265.5 434.3 270.0 440.0C274.5 445.7 273.8 446.1 283.0 454.2C292.2 462.4 311.0 479.0 325.0 488.8C339.0 498.5 353.0 505.7 367.0 512.5C381.0 519.3 401.8 526.7 408.8 529.5" stroke="#eef0f2" stroke-width="0.9" fill="none" />
<path d="M252.0 305.0C252.2 307.5 252.5 315.0 253.0 320.0C253.5 325.0 253.3 328.0 255.0 335.0C256.7 342.0 259.0 352.0 263.0 362.0C267.0 372.0 273.4 385.8 278.8 395.0C284.1 404.2 286.9 408.3 295.0 417.5C303.1 426.7 313.3 440.2 327.5 450.0C341.7 459.8 360.4 466.8 380.0 476.0C399.6 485.2 426.7 498.8 445.0 505.0C463.3 511.2 477.5 511.2 490.0 513.0C502.5 514.8 508.3 515.2 520.0 516.0C531.7 516.8 553.3 517.7 560.0 518.0" stroke="#eef0f2" stroke-width="0.9" fill="none" />
<path d="M560.0 518.0L722.5 520.5L722.5 533.8" stroke="#eef0f2" stroke-width="1" fill="none" />
<path d="M296.0 421.0L293.5 418.0L296.5 416.5L308.0 475.7L380.0 479.0L382.0 475.7L366.0 478.0" stroke="#eef0f2" stroke-width="1" fill="none" />
<path d="M446.2 528.0L446.5 524.5L530.0 516.2L530.0 530.0" stroke="#eef0f2" stroke-width="1" fill="none" />
<path d="M283.0 334.5C290.0 335.2 311.0 337.2 325.0 338.4C339.0 339.6 352.8 340.6 366.8 341.7C380.7 342.8 394.8 344.2 408.8 345.2C422.7 346.2 436.5 347.0 450.5 347.9C464.5 348.9 478.9 349.9 493.0 350.9C507.1 351.9 521.0 353.0 535.0 353.9C549.0 354.9 563.0 355.6 577.0 356.4C591.0 357.3 605.0 358.2 619.0 358.9C633.0 359.7 647.1 360.6 661.0 361.2C674.9 361.8 688.6 362.1 702.5 362.7C716.4 363.3 730.5 364.4 744.5 364.9C758.5 365.5 772.5 365.8 786.5 366.2C800.5 366.6 814.3 366.9 828.2 367.2C842.2 367.4 856.2 367.6 870.2 367.7C884.3 367.8 898.5 367.9 912.5 367.9C926.5 367.9 940.5 367.9 954.5 367.7C968.5 367.5 982.3 367.3 996.2 366.9C1010.2 366.6 1024.2 366.0 1038.2 365.4C1052.2 364.9 1066.2 364.2 1080.2 363.4C1094.2 362.7 1108.2 361.9 1122.2 360.9C1136.2 360.0 1151.6 359.1 1164.2 357.9C1176.9 356.8 1189.2 355.0 1198.0 354.2C1206.8 353.4 1213.8 353.4 1217.0 353.3" stroke="#eef0f2" stroke-width="1.3" fill="none" />
<path d="M408.8 529.5C415.8 531.8 436.7 539.0 450.8 543.0C464.8 547.0 479.0 550.1 493.0 553.2C507.0 556.4 521.0 559.3 535.0 561.8C549.0 564.2 563.0 566.2 577.0 568.0C591.0 569.8 605.0 571.2 619.0 572.5C633.0 573.8 647.1 575.0 661.0 575.8C674.9 576.5 688.6 577.0 702.5 577.2C716.4 577.5 730.5 577.5 744.5 577.5C758.5 577.5 772.5 577.5 786.5 577.5C800.5 577.5 814.3 577.5 828.2 577.5C842.2 577.5 856.2 577.5 870.2 577.5C884.3 577.5 898.5 577.5 912.5 577.5C926.5 577.5 940.5 577.6 954.5 577.5C968.5 577.4 982.3 577.4 996.2 577.0C1010.2 576.6 1024.2 576.1 1038.2 575.2C1052.2 574.4 1066.2 573.0 1080.2 571.8C1094.2 570.5 1113.3 568.5 1122.2 567.5C1131.2 566.5 1131.8 566.0 1133.8 565.8" stroke="#21d4dc" stroke-width="1.1" fill="none" />
<path d="M278.50 332.1V418.8M299.50 354.8V445.0M320.50 335.8V465.0M341.50 358.3V478.8M362.50 339.2V490.5M383.50 361.7V500.5M404.50 342.6V508.2M425.50 364.9V516.2M446.50 345.5V527.5M467.50 367.8V517.0M488.50 348.4V522.5M509.50 370.7V523.8M530.50 351.4V541.5M551.50 373.5V541.9M572.50 354.0V542.2M593.50 376.0V542.5M614.50 356.5V542.8M635.50 378.4V543.2M656.50 358.8V543.5M677.50 380.4V543.8M698.50 360.4V544.1M719.50 382.2V544.4M740.50 362.5V544.8M761.50 384.1V545.1M782.50 361.4V545.4M803.50 361.9V545.7M824.50 362.4V546.0M845.50 362.7V546.4M866.50 363.0V546.7M887.50 363.1V547.0M908.50 363.2V547.3M929.50 363.1V547.7M950.50 363.0V538.7M971.50 362.7V539.1M992.50 362.3V539.5M1013.50 361.6V539.8M1034.50 360.9V540.0M1055.50 359.9V530.5M1076.50 358.9V519.5M1097.50 357.7V504.5M1118.50 356.5V490.6M1139.50 355.0V474.0M1160.50 353.5V453.0" stroke="#ec2420" stroke-width="1" fill="none" />
<path d="M286.50 334.3V430.0M307.50 336.2V453.8M328.50 338.0V471.2M349.50 339.7V483.8M370.50 341.3V495.0M391.50 343.1V504.2M412.50 344.7V511.8M433.50 346.1V519.2M454.50 347.5V513.0M475.50 349.0V522.0M496.50 350.5V525.0M517.50 352.0V526.2M538.50 353.5V541.7M559.50 354.7V542.0M580.50 356.0V542.3M601.50 357.2V542.6M622.50 358.4V543.0M643.50 359.6V543.3M664.50 360.6V543.6M685.50 361.4V543.9M706.50 362.2V544.2M727.50 363.3V544.6M748.50 364.4V544.9M769.50 365.0V545.2M790.50 384.9V545.5M811.50 366.1V545.8M832.50 385.9V546.2M853.50 366.8V546.5M874.50 386.3V546.8M895.50 367.1V547.1M916.50 386.5V547.5M937.50 367.1V547.8M958.50 386.2V538.9M979.50 366.6V539.2M1000.50 385.4V539.6M1021.50 365.3V540.0M1042.50 383.8V536.2M1063.50 363.5V526.2M1084.50 381.8V513.8M1105.50 361.2V498.8M1126.50 379.2V484.3M1147.50 358.4V466.0M1168.50 376.1V444.3" stroke="#1c1ce8" stroke-width="1" fill="none" />
<path d="M278.5 418.8L286.5 430.0M278.5 394.8L286.5 408.0M299.5 445.0L307.5 453.8M299.5 422.6L307.5 433.4M320.5 465.0L328.5 471.2M320.5 444.2L328.5 452.4M341.5 478.8L349.5 483.8M341.5 459.6L349.5 466.6M362.5 490.5L370.5 495.0M362.5 472.9L370.5 479.4M383.5 500.5L391.5 504.2M383.5 484.5L391.5 490.2M404.5 508.2L412.5 511.8M404.5 493.9L412.5 499.4M425.5 516.2L433.5 519.2M425.5 503.4L433.5 508.4M467.5 517.0L475.5 522.0M488.5 522.5L496.5 525.0M509.5 523.8L517.5 526.2M1034.5 540.0L1042.5 536.2M1055.5 530.5L1063.5 526.2M1076.5 519.5L1084.5 513.8M1097.5 504.5L1105.5 498.8M1118.5 490.6L1126.5 484.3M1139.5 474.0L1147.5 466.0" stroke="#0d0d0d" stroke-width="0.8" fill="none" />
<path d="M278.5 332.7L286.5 334.0M320.5 336.4L328.5 337.7M362.5 339.8L370.5 341.0M404.5 343.2L412.5 344.4M446.5 346.1L454.5 347.2M488.5 349.0L496.5 350.2M530.5 352.0L538.5 353.2M572.5 354.6L580.5 355.7M614.5 357.1L622.5 358.1M656.5 359.4L664.5 360.3M698.5 361.0L706.5 361.9M740.5 363.1L748.5 364.1M782.5 364.5L790.5 365.3M803.5 365.0L811.5 365.8M824.5 365.5L832.5 366.3M845.5 365.8L853.5 366.5M866.5 366.1L874.5 366.7M887.5 366.2L895.5 366.8M908.5 366.3L916.5 366.9M929.5 366.2L937.5 366.8M950.5 366.1L958.5 366.6M971.5 365.8L979.5 366.3M992.5 365.4L1000.5 365.8M1013.5 364.7L1021.5 365.0M1034.5 364.0L1042.5 364.2M1055.5 363.0L1063.5 363.2M1076.5 362.0L1084.5 362.2M1097.5 360.8L1105.5 360.9M1118.5 359.6L1126.5 359.6M1139.5 358.1L1147.5 358.1M1160.5 356.6L1168.5 356.5" stroke="#0d0d0d" stroke-width="0.9" fill="none" />
<path d="M950.2 534.1L958.8 529.3M971.2 530.9L979.8 526.0M992.2 527.6L1000.8 522.8M1013.2 524.3L1021.8 519.5M1034.2 521.1L1042.8 516.2M1055.2 517.8L1063.8 513.0M1076.2 510.9L1084.8 501.2" stroke="#0d0d0d" stroke-width="0.7" fill="none" />
<path d="M294.10 312.5V353.8M336.00 316.1V358.1M377.90 319.5V361.5M419.80 322.7V364.7M503.60 328.5V370.5M545.50 331.4V373.4M587.40 333.8V375.8M629.30 336.3V378.3M671.20 338.3V380.3M713.10 340.0V382.0M755.00 342.0V384.0M790.50 343.0V385.0M832.50 343.9V385.9M874.50 344.3V386.3M916.50 344.5V386.5M958.50 344.2V386.2M1000.50 343.3V385.3M1042.50 341.7V383.7M1084.50 339.6V381.6M1126.50 337.0V379.0M1168.50 333.7V375.7" stroke="#ec2420" stroke-width="1" fill="none" />
<path d="M299.80 312.5V353.8M341.70 316.1V358.1M383.60 319.5V361.5M425.50 322.7V364.7M467.40 325.6V367.6M509.30 328.5V370.5M551.20 331.4V373.4M593.10 333.8V375.8M635.00 336.3V378.3M676.90 338.3V380.3M718.80 340.0V382.0M760.70 342.0V384.0M796.50 343.0V385.0M838.50 343.9V385.9M880.50 344.3V386.3M922.50 344.5V386.5M964.50 344.2V386.2M1006.50 343.3V385.3M1048.50 341.7V383.7M1090.50 339.6V381.6M1132.50 337.0V379.0M1174.50 333.7V375.7" stroke="#1c1ce8" stroke-width="1" fill="none" />
<path d="M294.10 353.8H299.80M294.10 312.5H299.80M294.10 314.1H299.80M336.00 358.1H341.70M336.00 316.1H341.70M336.00 317.7H341.70M377.90 361.5H383.60M377.90 319.5H383.60M377.90 321.1H383.60M419.80 364.7H425.50M419.80 322.7H425.50M419.80 324.3H425.50M461.70 325.6V367.6H467.40M461.70 325.6H467.40M461.70 327.2H467.40M503.60 370.5H509.30M503.60 328.5H509.30M503.60 330.1H509.30M545.50 373.4H551.20M545.50 331.4H551.20M545.50 333.0H551.20M587.40 375.8H593.10M587.40 333.8H593.10M587.40 335.4H593.10M629.30 378.3H635.00M629.30 336.3H635.00M629.30 337.9H635.00M671.20 380.3H676.90M671.20 338.3H676.90M671.20 339.9H676.90M713.10 382.0H718.80M713.10 340.0H718.80M713.10 341.6H718.80M755.00 384.0H760.70M755.00 342.0H760.70M755.00 343.6H760.70M790.50 385.0H796.50M790.50 343.0H796.50M790.50 344.6H796.50M832.50 385.9H838.50M832.50 343.9H838.50M832.50 345.5H838.50M874.50 386.3H880.50M874.50 344.3H880.50M874.50 345.9H880.50M916.50 386.5H922.50M916.50 344.5H922.50M916.50 346.1H922.50M958.50 386.2H964.50M958.50 344.2H964.50M958.50 345.8H964.50M1000.50 385.3H1006.50M1000.50 343.3H1006.50M1000.50 344.9H1006.50M1042.50 383.7H1048.50M1042.50 341.7H1048.50M1042.50 343.3H1048.50M1084.50 381.6H1090.50M1084.50 339.6H1090.50M1084.50 341.2H1090.50M1126.50 379.0H1132.50M1126.50 337.0H1132.50M1126.50 338.6H1132.50M1168.50 375.7H1174.50M1168.50 333.7H1174.50M1168.50 335.3H1174.50" stroke="#0d0d0d" stroke-width="0.55" fill="none" />
<path d="M299.8 334.8L307.5 336.3M341.7 338.4L349.5 339.8M383.6 341.7L391.5 343.2M425.5 344.9L433.5 346.2M467.4 347.7L475.5 349.1M509.3 350.7L517.5 352.1M551.2 353.5L559.5 354.8M593.1 356.0L601.5 357.3M635.0 358.4L643.5 359.7M676.9 360.4L685.5 361.5M718.8 362.2L727.5 363.4M760.7 364.0L769.5 365.1" stroke="#0d0d0d" stroke-width="1" fill="none" />
<path d="M517.5 329V352" stroke="#1c1ce8" stroke-width="1" fill="none" />
<path d="M319.0 337.5L336.1 338.9L353.2 340.2L370.2 341.6L387.3 343.0L404.4 344.4L404.4 348.9L387.3 347.5L370.2 346.1L353.2 344.7L336.1 343.4L319.0 342.0L319.0 337.5" stroke="#ec2420" stroke-width="1" fill="none" />
<path d="M462.0 345.0L473.0 345.7L484.0 346.5L495.0 347.3L506.0 348.1L517.0 348.9L517.0 354.9L506.0 354.1L495.0 353.3L484.0 352.5L473.0 351.7L462.0 351.0L462.0 345.0" stroke="#ec2420" stroke-width="1.1" fill="none" />
<path d="M566.0 351.0L577.2 351.7L588.4 352.3L599.6 353.0L610.8 353.7L622.0 354.3L622.0 359.1L610.8 358.5L599.6 357.8L588.4 357.1L577.2 356.5L566.0 355.8L566.0 351.0" stroke="#f08a1e" stroke-width="1.1" fill="none" />
<path d="M622.5 353.0L700.0 355.5L783.8 358.5L783.8 362.0" stroke="#ec2420" stroke-width="1.2" fill="none" />
<path d="M622.5 354.8L700.0 356.6L783.8 359.2" stroke="#ec2420" stroke-width="0.9" fill="none" />
<path d="M874.5 366.0L874.5 360.8L960.0 361.0L1010.0 361.5" stroke="#ec2420" stroke-width="1" fill="none" />
<path d="M1008.0 366.0L1008.0 359.5L1080.0 357.0L1130.0 354.0L1170.0 351.5L1183.0 350.5" stroke="#ec2420" stroke-width="1" fill="none" />
<path d="M1008.0 361.5L1080.0 359.0L1130.0 356.0L1183.0 352.5" stroke="#ec2420" stroke-width="0.8" fill="none" />
<path d="M900.0 369.0L1000.0 368.0L1100.0 364.5L1183.0 359.0" stroke="#ec2420" stroke-width="0.8" fill="none" />
<path d="M811 358V366M817.5 359V366M824 344V366M839 358V366M845 344V366" stroke="#ec2420" stroke-width="0.9" fill="none" />
<path d="M640.0 353.4V357.9M661.0 354.5V359.0M682.0 355.3V359.8M703.0 356.0V360.5M724.0 357.2V361.7M745.0 358.3V362.8M766.0 358.9V363.4" stroke="#ec2420" stroke-width="0.8" fill="none" />
<path d="M231.8 328.2C240.3 329.0 267.5 331.2 283.0 332.5C298.5 333.8 311.0 335.1 325.0 336.2C339.0 337.4 352.8 338.4 366.8 339.5C380.7 340.6 394.8 342.0 408.8 343.0C422.7 344.0 436.5 344.8 450.5 345.8C464.5 346.7 478.9 347.8 493.0 348.8C507.1 349.8 521.0 350.8 535.0 351.8C549.0 352.7 563.0 353.4 577.0 354.2C591.0 355.1 605.0 356.0 619.0 356.8C633.0 357.5 647.1 358.4 661.0 359.0C674.9 359.6 688.6 359.9 702.5 360.5C716.4 361.1 730.5 362.2 744.5 362.8C758.5 363.3 772.5 363.6 786.5 364.0C800.5 364.4 814.3 364.8 828.2 365.0C842.2 365.2 856.2 365.4 870.2 365.5C884.3 365.6 898.5 365.8 912.5 365.8C926.5 365.8 940.5 365.7 954.5 365.5C968.5 365.3 982.3 365.1 996.2 364.8C1010.2 364.4 1024.2 363.8 1038.2 363.2C1052.2 362.7 1066.2 362.0 1080.2 361.2C1094.2 360.5 1108.2 359.7 1122.2 358.8C1136.2 357.8 1151.6 356.9 1164.2 355.8C1176.9 354.6 1189.9 352.8 1198.0 352.0C1206.1 351.2 1210.5 351.0 1213.0 350.8" stroke="#21d4dc" stroke-width="1" fill="none" />
<path d="M288.5 335.0V341.5M294.5 335.5V342.0M314.5 337.3V343.8M318.5 337.7V344.2M343.5 339.7V346.2M350.5 340.2V346.7M370.5 341.8V348.3M378.5 342.5V349.0M400.5 344.3V350.8M408.5 345.0V351.5M427.5 346.2V352.7M434.5 346.7V353.2M458.5 348.3V354.8M464.5 348.7V355.2M485.5 350.2V356.7M492.5 350.7V357.2M513.5 352.2V358.7M520.5 352.7V359.2M539.5 354.0V360.5M545.5 354.4V360.9M563.5 355.4V361.9M570.5 355.9V362.4M590.5 357.1V363.6M598.5 357.5V364.0M618.5 358.7V365.2M626.5 359.2V365.7M647.5 360.3V366.8M653.5 360.6V367.1M673.5 361.5V368.0M680.5 361.7V368.2M700.5 362.4V368.9M706.5 362.7V369.2M726.5 363.8V370.3M732.5 364.1V370.6M752.5 365.0V371.5M758.5 365.2V371.7M779.5 365.8V372.3M788.5 366.0V372.5M810.5 366.6V373.1M817.5 366.7V373.2M838.5 367.1V373.6M846.5 367.2V373.7M869.5 367.5V374.0M877.5 367.5V374.0M902.5 367.7V374.2M907.5 367.7V374.2M930.5 367.6V374.1M936.5 367.6V374.1M962.5 367.4V373.9M970.5 367.2V373.7M982.5 367.0V373.5M990.5 366.9V373.4M1002.5 366.5V373.0M1010.5 366.2V372.7M1032.5 365.5V372.0M1038.5 365.2V371.7M1057.5 364.3V370.8M1063.5 364.0V370.5M1086.5 362.9V369.4M1092.5 362.5V369.0M1112.5 361.3V367.8M1119.5 360.9V367.4M1137.5 359.7V366.2M1144.5 359.2V365.7M1158.5 358.2V364.7M1164.5 357.7V364.2M1178.5 356.2V362.7M1186.5 355.3V361.8" stroke="#000" stroke-width="1.1" fill="none" />
<path d="M590 351.0V357.0M598 351.5V357.5M629 353.3V359.3M637 353.7V359.7M780 359.8V365.8M786 360.0V366.0M875 361.5V367.5M880 361.6V367.6M972 361.2V367.2M983 361.0V367.0M991 360.8V366.8M1003 360.5V366.5M1008 360.3V366.3" stroke="#2bdc2b" stroke-width="0.9" fill="none" />
<path d="M243.1 330.2C243.3 333.2 242.8 340.2 244.3 348.2C245.8 356.2 247.6 366.9 251.8 378.2C256.0 389.4 263.9 406.1 269.3 415.7C274.7 425.3 278.9 429.0 284.3 435.7C289.7 442.4 294.3 448.6 301.8 455.7C309.3 462.8 318.1 470.7 329.3 478.2C340.6 485.7 356.4 494.3 369.3 500.7C382.2 507.1 394.1 511.9 406.8 516.7C419.5 521.5 438.9 527.3 445.3 529.5" stroke="#ec2420" stroke-width="1" fill="none" />
<path d="M243.8 329.5C244.0 332.5 243.5 339.5 245.0 347.5C246.5 355.5 248.3 366.2 252.5 377.5C256.7 388.8 264.6 405.4 270.0 415.0C275.4 424.6 279.6 428.3 285.0 435.0C290.4 441.7 295.0 447.9 302.5 455.0C310.0 462.1 318.8 470.0 330.0 477.5C341.2 485.0 357.1 493.6 370.0 500.0C382.9 506.4 394.8 511.2 407.5 516.0C420.2 520.8 439.6 526.6 446.0 528.8" stroke="#2bdc2b" stroke-width="1.1" fill="none" />
<path d="M243.75 329V333" stroke="#2bdc2b" stroke-width="1" fill="none" />
<path d="M446.0 529.0C450.0 529.9 461.0 532.5 470.0 534.0C479.0 535.6 490.0 537.1 500.0 538.3C510.0 539.5 520.0 540.6 530.0 541.3C540.0 542.0 495.0 541.2 560.0 542.3C625.0 543.4 832.5 546.3 920.0 547.8C1007.5 549.3 1057.5 550.5 1085.0 551.0" stroke="#ec2420" stroke-width="1" fill="none" />
<path d="M446.0 528.5C450.0 529.3 461.0 531.9 470.0 533.5C479.0 535.0 490.0 536.5 500.0 537.7C510.0 538.9 520.0 540.0 530.0 540.7C540.0 541.4 495.0 540.6 560.0 541.7C625.0 542.8 832.5 545.7 920.0 547.2C1007.5 548.7 1057.5 549.9 1085.0 550.5" stroke="#f0109a" stroke-width="0.9" fill="none" />
<path d="M1085.0 550.8L1118.2 550.8" stroke="#d9dadc" stroke-width="1.1" fill="none" />
<path d="M405.0 528.9L446.0 528.6L580.0 531.0L920.0 538.0L1120.0 541.8" stroke="#0d0d0d" stroke-width="2" fill="none" />
<path d="M446.0 529.0L580.0 531.2L920.0 538.2L1056.0 540.8" stroke="#21d4dc" stroke-width="1.5" fill="none" stroke-dasharray="26 40" stroke-dashoffset="-12"/>
<path d="M1056.0 540.5L1120.0 541.8L1141.0 541.5" stroke="#2bdc2b" stroke-width="1" fill="none" stroke-dasharray="14 6"/>
<path d="M1214.2 321.7L1195.0 373.0L1185.9 400.0L1168.4 444.3" stroke="#ec2420" stroke-width="0.9" fill="none" />
<path d="M1219.6 324.6L1201.7 373.0L1192.2 400.0L1178.6 435.0L1168.4 445.0" stroke="#1c1ce8" stroke-width="1" fill="none" />
<path d="M1222.5 327.0L1205.4 373.0L1196.2 400.0L1184.5 429.4L1181.0 438.0L1147.5 478.8L1138.2 500.0L1118.2 550.8" stroke="#f0109a" stroke-width="1" fill="none" />
<path d="M1178.8 442.5L1147.5 478.8L1118.2 550.8" stroke="#eef0f2" stroke-width="1" fill="none" />
<path d="M1224.0 322.5L1222.3 327.0" stroke="#0d0d0d" stroke-width="0.8" fill="none" />
<path d="M1184.5 429.4L1175.0 455.0L1164.4 483.1L1143.8 541.2" stroke="#2bdc2b" stroke-width="1" fill="none" />
<path d="M1143.8 541.2L1142.0 546.0L1133.8 565.8" stroke="#f0109a" stroke-width="1" fill="none" />
<path d="M912.5 538.0L912.5 535.0L1070.0 510.5L1096.2 491.2L1096.2 482.7L1151.5 443.7L1161.0 420.0L1175.0 390.0L1182.5 373.0L1194.2 351.2" stroke="#2bdc2b" stroke-width="1" fill="none" />
<path d="M1056.2 542.5L1062.5 538.8L1100.0 513.0L1139.2 478.0L1180.0 436.0" stroke="#2bdc2b" stroke-width="1" fill="none" />
<path d="M1115.0 541.5L1115.0 538.0L1131.6 500.0L1140.0 478.0L1150.0 455.0" stroke="#2bdc2b" stroke-width="1" fill="none" />
<path d="M1210.0 357.5L1201.0 385.0L1187.5 425.0" stroke="#2bdc2b" stroke-width="0.9" fill="none" />
<path d="M1126.0 547.5L1126.0 550.3L1134.0 550.3L1134.0 547.5" stroke="#2bdc2b" stroke-width="0.9" fill="none" />
<path d="M1118.0 546.0L1142.0 546.0" stroke="#2bdc2b" stroke-width="0.8" fill="none" />
<path d="M1151.5 446.3L1171.3 446.6L1147.5 477.4L1139.2 477.4L1151.5 446.3" stroke="#0d0d0d" stroke-width="1.6" fill="none" />
<path d="M1156 446.5L1143.5 477.4M1161 446.5L1147 472M1148 456H1164M1144 467.5H1155.5" stroke="#0d0d0d" stroke-width="0.7" fill="none" />
<path d="M1173.3 457.6C1171.9 457.9 1167.2 458.2 1164.7 459.6C1162.2 461.0 1159.2 463.6 1158.0 466.0C1156.8 468.4 1157.1 471.3 1157.4 474.0C1157.7 476.7 1160.3 479.3 1160.0 482.0C1159.7 484.7 1156.1 487.3 1155.4 490.0C1154.7 492.7 1155.9 496.7 1156.0 498.0" stroke="#0d0d0d" stroke-width="0.8" fill="none" />
<path d="M1160 434L1168 429M1174 432L1181 426" stroke="#0d0d0d" stroke-width="0.7" fill="none" />
<path d="M231.8 295.8L252.0 299.5L252.0 305.0" stroke="#0d0d0d" stroke-width="0.8" fill="none" />
<circle cx="231.8" cy="303.0" r="2.3" fill="#fff" stroke="#1a1a1a" stroke-width="0.8"/>
<circle cx="231.8" cy="328.2" r="2.3" fill="#fff" stroke="#1a1a1a" stroke-width="0.8"/>
<circle cx="283.0" cy="332.5" r="2.3" fill="#fff" stroke="#1a1a1a" stroke-width="0.8"/>
<circle cx="325.0" cy="336.2" r="2.3" fill="#fff" stroke="#1a1a1a" stroke-width="0.8"/>
<circle cx="366.8" cy="339.5" r="2.3" fill="#fff" stroke="#1a1a1a" stroke-width="0.8"/>
<circle cx="408.8" cy="343.0" r="2.3" fill="#fff" stroke="#1a1a1a" stroke-width="0.8"/>
<circle cx="450.5" cy="345.8" r="2.3" fill="#fff" stroke="#1a1a1a" stroke-width="0.8"/>
<circle cx="493.0" cy="348.8" r="2.3" fill="#fff" stroke="#1a1a1a" stroke-width="0.8"/>
<circle cx="535.0" cy="351.8" r="2.3" fill="#fff" stroke="#1a1a1a" stroke-width="0.8"/>
<circle cx="577.0" cy="354.2" r="2.3" fill="#fff" stroke="#1a1a1a" stroke-width="0.8"/>
<circle cx="619.0" cy="356.8" r="2.3" fill="#fff" stroke="#1a1a1a" stroke-width="0.8"/>
<circle cx="661.0" cy="359.0" r="2.3" fill="#fff" stroke="#1a1a1a" stroke-width="0.8"/>
<circle cx="702.5" cy="360.5" r="2.3" fill="#fff" stroke="#1a1a1a" stroke-width="0.8"/>
<circle cx="744.5" cy="362.8" r="2.3" fill="#fff" stroke="#1a1a1a" stroke-width="0.8"/>
<circle cx="786.5" cy="364.0" r="2.3" fill="#fff" stroke="#1a1a1a" stroke-width="0.8"/>
<circle cx="828.2" cy="365.0" r="2.3" fill="#fff" stroke="#1a1a1a" stroke-width="0.8"/>
<circle cx="870.2" cy="365.5" r="2.3" fill="#fff" stroke="#1a1a1a" stroke-width="0.8"/>
<circle cx="912.5" cy="365.8" r="2.3" fill="#fff" stroke="#1a1a1a" stroke-width="0.8"/>
<circle cx="954.5" cy="365.5" r="2.3" fill="#fff" stroke="#1a1a1a" stroke-width="0.8"/>
<circle cx="996.2" cy="364.8" r="2.3" fill="#fff" stroke="#1a1a1a" stroke-width="0.8"/>
<circle cx="1038.2" cy="363.2" r="2.3" fill="#fff" stroke="#1a1a1a" stroke-width="0.8"/>
<circle cx="1080.2" cy="361.2" r="2.3" fill="#fff" stroke="#1a1a1a" stroke-width="0.8"/>
<circle cx="1122.2" cy="358.8" r="2.3" fill="#fff" stroke="#1a1a1a" stroke-width="0.8"/>
<circle cx="1164.2" cy="355.8" r="2.3" fill="#fff" stroke="#1a1a1a" stroke-width="0.8"/>
<circle cx="1198.0" cy="351.2" r="2.3" fill="#fff" stroke="#1a1a1a" stroke-width="0.8"/>
<circle cx="1198.0" cy="355.4" r="2.3" fill="#fff" stroke="#1a1a1a" stroke-width="0.8"/>
<circle cx="1198.0" cy="359.2" r="2.3" fill="#fff" stroke="#1a1a1a" stroke-width="0.8"/>
<circle cx="1209.2" cy="350.4" r="2.3" fill="#fff" stroke="#1a1a1a" stroke-width="0.8"/>
<circle cx="1213.3" cy="351.2" r="2.3" fill="#fff" stroke="#1a1a1a" stroke-width="0.8"/>
<circle cx="1207.5" cy="359.2" r="2.3" fill="#fff" stroke="#1a1a1a" stroke-width="0.8"/>
<circle cx="1210.8" cy="329.2" r="2.3" fill="#fff" stroke="#1a1a1a" stroke-width="0.8"/>
<circle cx="1210.0" cy="332.5" r="2.3" fill="#fff" stroke="#1a1a1a" stroke-width="0.8"/>
<circle cx="1217.5" cy="329.6" r="2.3" fill="#fff" stroke="#1a1a1a" stroke-width="0.8"/>
<circle cx="1216.7" cy="332.0" r="2.3" fill="#fff" stroke="#1a1a1a" stroke-width="0.8"/>
<circle cx="1215.0" cy="347.5" r="2.3" fill="#fff" stroke="#d060c0" stroke-width="0.8"/>
<circle cx="1222.5" cy="327.0" r="2.3" fill="#fff" stroke="#e02020" stroke-width="0.8"/>
<circle cx="283.0" cy="454.2" r="2.3" fill="#fff" stroke="#e02020" stroke-width="0.8"/>
<circle cx="325.0" cy="488.8" r="2.3" fill="#fff" stroke="#e02020" stroke-width="0.8"/>
<circle cx="367.0" cy="512.5" r="2.3" fill="#fff" stroke="#e02020" stroke-width="0.8"/>
<circle cx="408.8" cy="529.5" r="2.3" fill="#fff" stroke="#e02020" stroke-width="0.8"/>
<circle cx="450.8" cy="543.0" r="2.3" fill="#fff" stroke="#e02020" stroke-width="0.8"/>
<circle cx="493.0" cy="553.2" r="2.3" fill="#fff" stroke="#e02020" stroke-width="0.8"/>
<circle cx="535.0" cy="561.8" r="2.3" fill="#fff" stroke="#e02020" stroke-width="0.8"/>
<circle cx="577.0" cy="568.0" r="2.3" fill="#fff" stroke="#e02020" stroke-width="0.8"/>
<circle cx="619.0" cy="572.5" r="2.3" fill="#fff" stroke="#e02020" stroke-width="0.8"/>
<circle cx="661.0" cy="575.8" r="2.3" fill="#fff" stroke="#e02020" stroke-width="0.8"/>
<circle cx="702.5" cy="577.2" r="2.3" fill="#fff" stroke="#e02020" stroke-width="0.8"/>
<circle cx="744.5" cy="577.5" r="2.3" fill="#fff" stroke="#e02020" stroke-width="0.8"/>
<circle cx="786.5" cy="577.5" r="2.3" fill="#fff" stroke="#e02020" stroke-width="0.8"/>
<circle cx="828.2" cy="577.5" r="2.3" fill="#fff" stroke="#e02020" stroke-width="0.8"/>
<circle cx="870.2" cy="577.5" r="2.3" fill="#fff" stroke="#e02020" stroke-width="0.8"/>
<circle cx="912.5" cy="577.5" r="2.3" fill="#fff" stroke="#e02020" stroke-width="0.8"/>
<circle cx="954.5" cy="577.5" r="2.3" fill="#fff" stroke="#e02020" stroke-width="0.8"/>
<circle cx="996.2" cy="577.0" r="2.3" fill="#fff" stroke="#e02020" stroke-width="0.8"/>
<circle cx="1038.2" cy="575.2" r="2.3" fill="#fff" stroke="#e02020" stroke-width="0.8"/>
<circle cx="1080.2" cy="571.8" r="2.3" fill="#fff" stroke="#e02020" stroke-width="0.8"/>
<circle cx="1122.2" cy="567.5" r="2.3" fill="#fff" stroke="#e02020" stroke-width="0.8"/>
<circle cx="1133.8" cy="565.8" r="2.3" fill="#fff" stroke="#e02020" stroke-width="0.8"/>
<circle cx="446.0" cy="528.8" r="2.3" fill="#fff" stroke="#e02020" stroke-width="0.8"/>
<circle cx="1184.5" cy="429.4" r="2.3" fill="#fff" stroke="#e02020" stroke-width="0.8"/>
<circle cx="1164.4" cy="483.1" r="2.3" fill="#fff" stroke="#e02020" stroke-width="0.8"/>
<circle cx="1142.5" cy="542.0" r="2.3" fill="#fff" stroke="#1a1a1a" stroke-width="0.8"/>
<circle cx="1118.2" cy="550.8" r="2.3" fill="#fff" stroke="#1a1a1a" stroke-width="0.8"/>
<circle cx="769.5" cy="544.2" r="2" fill="none" stroke="#1b1fe0" stroke-width="0.8"/>
<circle cx="790.8" cy="544.8" r="2" fill="none" stroke="#1b1fe0" stroke-width="0.8"/>
<circle cx="811.8" cy="545.2" r="2" fill="none" stroke="#1b1fe0" stroke-width="0.8"/>
<path d="M79.5 637V659.5H101" stroke="#3c3f47" stroke-width="1" fill="none"/>
</svg>
<div class="t" style="left:29px;top:528px;font-size:9px;color:#3c3f47">z</div>
<div class="t" style="left:52px;top:549px;font-size:9px;color:#3c3f47">y</div>
</div>
<div class="a" style="left:1288px;top:99px;width:152px;height:604px;background:#d8d9dd"></div>
<div class="a" style="left:1291px;top:99px;width:136px;height:603px;background:#ededf1;border-radius:4px 0 0 0"></div>
<div class="a" style="left:1426px;top:99px;width:14px;height:15px;background:#ededf1"></div>
<div class="a" style="left:1426px;top:113px;width:14px;height:27px;background:#dedfe3;border-radius:0 0 0 4px"></div>
<div class="a" style="left:1426px;top:140px;width:14px;height:28px;background:#ededf1"></div>
<div class="a" style="left:1426px;top:168px;width:14px;height:535px;background:#d8d9dd;border-radius:4px 0 0 0"></div>
<!-- strip icons -->
<svg style="left:1429px;top:121px" width="11" height="12" viewBox="0 0 11 12"><path d="M0 2L8 0L11 3V7L3 11L0 7Z" fill="#e4572e"/><path d="M0 5L3 8L11 5V7L3 11L0 7Z" fill="#2f5fc0"/><path d="M0 4L3 7L11 4V5L3 8L0 5Z" fill="#fff"/></svg>
<svg style="left:1428px;top:148px" width="12" height="12" viewBox="0 0 12 12"><defs><linearGradient id="cw" x1="0" y1="0" x2="1" y2="1"><stop offset="0" stop-color="#e33"/><stop offset="0.35" stop-color="#e6d22a"/><stop offset="0.6" stop-color="#2db84d"/><stop offset="0.8" stop-color="#2a6be0"/><stop offset="1" stop-color="#b23ad0"/></linearGradient></defs><circle cx="6" cy="6" r="4.4" fill="none" stroke="url(#cw)" stroke-width="2.6"/><circle cx="6" cy="6" r="5.7" fill="none" stroke="#222" stroke-width="0.7"/></svg>
<svg style="left:1428px;top:174px" width="12" height="13" viewBox="0 0 12 13"><rect x="0.5" y="0.5" width="11" height="9" fill="#c9cbd1" stroke="#111" stroke-width="1.2"/><rect x="4" y="10" width="5" height="2" fill="#111"/></svg>
<svg style="left:1428px;top:201px" width="12" height="12" viewBox="0 0 12 12"><rect x="0.5" y="0.5" width="11" height="11" fill="#3560d8" stroke="#6d7080" stroke-width="1"/><circle cx="6" cy="5.5" r="3.2" fill="#7fa0f0"/><text x="6" y="8.5" font-size="7" font-weight="bold" fill="#fff" text-anchor="middle" font-family="Liberation Sans">?</text></svg>
<div class="t" style="left:1294px;top:100px;font-size:8.9px;color:#6e7079">Properties: Viewport</div>
<div class="a" style="left:1291px;top:113px;width:136px;height:1px;background:#dfe0e5"></div>
<!-- icon buttons -->
<div class="a" style="left:1296px;top:117px;width:21px;height:21px;background:#d5dbf1"></div>
<svg style="left:1298px;top:120px" width="17" height="14" viewBox="0 0 17 14"><rect x="0.5" y="3.5" width="16" height="10" rx="1.5" fill="#3a3a3a"/><rect x="5" y="1" width="7" height="4" rx="1" fill="#2b2b2b"/><circle cx="9" cy="8.5" r="4" fill="#1c1c1c"/><circle cx="9" cy="8.5" r="2.4" fill="#4c5560"/><circle cx="9.8" cy="7.8" r="1" fill="#3f9a5a"/><rect x="1.5" y="4.5" width="3" height="1.5" fill="#666"/></svg>
<div class="a" style="left:1321px;top:119px;width:18px;height:16px;background:#a9d6ee;border:1px solid #8b8d93"></div>
<div class="a" style="left:1323px;top:121px;width:14px;height:12px;background:#fff;border:1px solid #e23a3a"></div>
<svg style="left:1346px;top:118px" width="18" height="18" viewBox="0 0 18 18"><defs><radialGradient id="bl" cx="35%" cy="30%" r="70%"><stop offset="0" stop-color="#e8f0ff"/><stop offset="0.35" stop-color="#3f6fd0"/><stop offset="1" stop-color="#0b1f6a"/></radialGradient></defs><circle cx="5" cy="13" r="4" fill="url(#bl)"/><circle cx="10" cy="7.5" r="3.2" fill="url(#bl)"/><circle cx="14" cy="3.5" r="2.5" fill="url(#bl)"/></svg>
<svg style="left:1429px;top:100px" width="11" height="11" viewBox="0 0 11 11"><circle cx="5" cy="5.5" r="2.4" fill="none" stroke="#c3c5cc" stroke-width="1.6"/><path d="M5 1.5V9.5M1 5.5H9M2.2 2.7L7.8 8.3M7.8 2.7L2.2 8.3" stroke="#c3c5cc" stroke-width="1.2"/><circle cx="5" cy="5.5" r="1.2" fill="#e9eaee"/></svg>
<div class="t" style="left:1294px;top:150px;font-size:10.4px;color:#4a4b53">Viewport</div>
<div class="a" style="left:1294px;top:164px;width:127px;height:1px;background:#e1e2e7"></div>
<div class="t" style="left:1306px;top:167px;font-size:8.9px;color:#222226;width:56px;overflow:hidden">Title</div>
<div class="a" style="left:1306px;top:180px;width:115px;height:1px;background:#e3e4e9"></div>
<div class="a" style="left:1365px;top:167px;width:55px;height:13px;background:#fff"></div>
<div class="t" style="left:1368px;top:167px;font-size:8.9px;color:#222226">Right</div>
<div class="t" style="left:1306px;top:183px;font-size:8.9px;color:#222226;width:56px;overflow:hidden">Width</div>
<div class="a" style="left:1306px;top:195px;width:115px;height:1px;background:#e3e4e9"></div>
<div class="a" style="left:1365px;top:182px;width:46px;height:13px;background:#fff"></div>
<div class="t" style="left:1368px;top:183px;font-size:8.9px;color:#222226;letter-spacing:-0.2px">1645</div>
<div class="a" style="left:1412px;top:182px;width:8px;height:13px;background:#f6f6f9"></div>
<svg style="left:1413px;top:183px" width="7" height="11"><path d="M1.2 4.2L3.5 1.6L5.8 4.2Z M1.2 6.8L3.5 9.4L5.8 6.8Z" fill="#222"/></svg>
<div class="t" style="left:1306px;top:198px;font-size:8.9px;color:#222226;width:56px;overflow:hidden">Height</div>
<div class="a" style="left:1306px;top:210px;width:115px;height:1px;background:#e3e4e9"></div>
<div class="a" style="left:1365px;top:197px;width:46px;height:13px;background:#fff"></div>
<div class="t" style="left:1368px;top:198px;font-size:8.9px;color:#222226;letter-spacing:-0.2px">778</div>
<div class="a" style="left:1412px;top:197px;width:8px;height:13px;background:#f6f6f9"></div>
<svg style="left:1413px;top:198px" width="7" height="11"><path d="M1.2 4.2L3.5 1.6L5.8 4.2Z M1.2 6.8L3.5 9.4L5.8 6.8Z" fill="#222"/></svg>
<div class="t" style="left:1306px;top:214px;font-size:8.9px;color:#222226;width:56px;overflow:hidden">Projection</div>
<div class="a" style="left:1306px;top:226px;width:115px;height:1px;background:#e3e4e9"></div>
<div class="a" style="left:1365px;top:213px;width:55px;height:13px;background:#fff"></div>
<div class="t" style="left:1368px;top:214px;font-size:8.9px;color:#222226;width:44px;overflow:hidden">Parallel</div>
<svg style="left:1412px;top:217px" width="6" height="5"><path d="M0.8 0.8L3 2.8L5.2 0.8" fill="none" stroke="#222" stroke-width="0.9"/></svg>
<div class="t" style="left:1306px;top:230px;font-size:8.9px;color:#222226;width:56px;overflow:hidden">Display mode</div>
<div class="a" style="left:1306px;top:242px;width:115px;height:1px;background:#e3e4e9"></div>
<div class="a" style="left:1365px;top:229px;width:55px;height:13px;background:#fff"></div>
<div class="t" style="left:1368px;top:230px;font-size:8.9px;color:#222226;width:44px;overflow:hidden">Wireframe</div>
<svg style="left:1412px;top:233px" width="6" height="5"><path d="M0.8 0.8L3 2.8L5.2 0.8" fill="none" stroke="#222" stroke-width="0.9"/></svg>
<div class="t" style="left:1306px;top:246px;font-size:8.9px;color:#222226;width:56px;overflow:hidden">Locked</div>
<div class="a" style="left:1306px;top:258px;width:115px;height:1px;background:#e3e4e9"></div>
<div class="a" style="left:1366px;top:247px;width:9px;height:9px;background:#fff;border:1px solid #d6d8e0"></div>
<div class="t" style="left:1294px;top:263px;font-size:10.4px;color:#4a4b53">Camera</div>
<div class="a" style="left:1294px;top:276px;width:127px;height:1px;background:#e1e2e7"></div>
<div class="t" style="left:1306px;top:278px;font-size:8.9px;color:#222226;width:56px;overflow:hidden">Lens Length (mm)</div>
<div class="a" style="left:1306px;top:291px;width:115px;height:1px;background:#e3e4e9"></div>
<div class="a" style="left:1365px;top:278px;width:46px;height:13px;background:#fff"></div>
<div class="t" style="left:1368px;top:278px;font-size:8.9px;color:#b9bbc3;letter-spacing:-0.2px">20719.198</div>
<div class="a" style="left:1412px;top:278px;width:8px;height:13px;background:#f6f6f9"></div>
<svg style="left:1413px;top:279px" width="7" height="11"><path d="M1.2 4.2L3.5 1.6L5.8 4.2Z M1.2 6.8L3.5 9.4L5.8 6.8Z" fill="#c0c2ca"/></svg>
<div class="t" style="left:1306px;top:294px;font-size:8.9px;color:#222226;width:56px;overflow:hidden">Rotation</div>
<div class="a" style="left:1306px;top:306px;width:115px;height:1px;background:#e3e4e9"></div>
<div class="a" style="left:1365px;top:293px;width:46px;height:13px;background:#fff"></div>
<div class="t" style="left:1368px;top:294px;font-size:8.9px;color:#222226;letter-spacing:-0.2px">0.0</div>
<div class="a" style="left:1412px;top:293px;width:8px;height:13px;background:#f6f6f9"></div>
<svg style="left:1413px;top:294px" width="7" height="11"><path d="M1.2 4.2L3.5 1.6L5.8 4.2Z M1.2 6.8L3.5 9.4L5.8 6.8Z" fill="#222"/></svg>
<div class="t" style="left:1306px;top:309px;font-size:8.9px;color:#222226;width:56px;overflow:hidden">X Location</div>
<div class="a" style="left:1306px;top:321px;width:115px;height:1px;background:#e3e4e9"></div>
<div class="a" style="left:1365px;top:308px;width:46px;height:13px;background:#fff"></div>
<div class="t" style="left:1368px;top:309px;font-size:8.9px;color:#222226;letter-spacing:-0.2px">24062.297</div>
<div class="a" style="left:1412px;top:308px;width:8px;height:13px;background:#f6f6f9"></div>
<svg style="left:1413px;top:309px" width="7" height="11"><path d="M1.2 4.2L3.5 1.6L5.8 4.2Z M1.2 6.8L3.5 9.4L5.8 6.8Z" fill="#222"/></svg>
<div class="t" style="left:1306px;top:324px;font-size:8.9px;color:#222226;width:56px;overflow:hidden">Y Location</div>
<div class="a" style="left:1306px;top:336px;width:115px;height:1px;background:#e3e4e9"></div>
<div class="a" style="left:1365px;top:323px;width:46px;height:13px;background:#fff"></div>
<div class="t" style="left:1368px;top:324px;font-size:8.9px;color:#222226;letter-spacing:-0.2px">227.480</div>
<div class="a" style="left:1412px;top:323px;width:8px;height:13px;background:#f6f6f9"></div>
<svg style="left:1413px;top:324px" width="7" height="11"><path d="M1.2 4.2L3.5 1.6L5.8 4.2Z M1.2 6.8L3.5 9.4L5.8 6.8Z" fill="#222"/></svg>
<div class="t" style="left:1306px;top:339px;font-size:8.9px;color:#222226;width:56px;overflow:hidden">Z Location</div>
<div class="a" style="left:1306px;top:351px;width:115px;height:1px;background:#e3e4e9"></div>
<div class="a" style="left:1365px;top:338px;width:46px;height:13px;background:#fff"></div>
<div class="t" style="left:1368px;top:339px;font-size:8.9px;color:#222226;letter-spacing:-0.2px">1.734</div>
<div class="a" style="left:1412px;top:338px;width:8px;height:13px;background:#f6f6f9"></div>
<svg style="left:1413px;top:339px" width="7" height="11"><path d="M1.2 4.2L3.5 1.6L5.8 4.2Z M1.2 6.8L3.5 9.4L5.8 6.8Z" fill="#222"/></svg>
<div class="t" style="left:1306px;top:354px;font-size:8.9px;color:#222226;width:56px;overflow:hidden">Distance to Target</div>
<div class="a" style="left:1306px;top:366px;width:115px;height:1px;background:#e3e4e9"></div>
<div class="a" style="left:1365px;top:353px;width:55px;height:13px;background:#fff"></div>
<div class="t" style="left:1368px;top:354px;font-size:8.9px;color:#222226">24062.297</div>
<div class="t" style="left:1306px;top:371px;font-size:8.9px;color:#222226;width:56px;overflow:hidden">Location</div>
<div class="a" style="left:1306px;top:383px;width:115px;height:1px;background:#e3e4e9"></div>
<div class="a" style="left:1365px;top:368px;width:56px;height:16px;background:#f0f0f4;border:1px solid #d0d3e0"></div>
<div class="t" style="left:1365px;top:371px;width:56px;text-align:center;font-size:8.9px;color:#222226">Place...</div>
<div class="t" style="left:1294px;top:390px;font-size:10.4px;color:#4a4b53">Target</div>
<div class="a" style="left:1294px;top:403px;width:127px;height:1px;background:#e1e2e7"></div>
<div class="t" style="left:1306px;top:406px;font-size:8.9px;color:#222226;width:56px;overflow:hidden">X Target</div>
<div class="a" style="left:1306px;top:418px;width:115px;height:1px;background:#e3e4e9"></div>
<div class="a" style="left:1365px;top:405px;width:46px;height:13px;background:#fff"></div>
<div class="t" style="left:1368px;top:406px;font-size:8.9px;color:#222226;letter-spacing:-0.2px">0.000</div>
<div class="a" style="left:1412px;top:405px;width:8px;height:13px;background:#f6f6f9"></div>
<svg style="left:1413px;top:406px" width="7" height="11"><path d="M1.2 4.2L3.5 1.6L5.8 4.2Z M1.2 6.8L3.5 9.4L5.8 6.8Z" fill="#222"/></svg>
<div class="t" style="left:1306px;top:421px;font-size:8.9px;color:#222226;width:56px;overflow:hidden">Y Target</div>
<div class="a" style="left:1306px;top:433px;width:115px;height:1px;background:#e3e4e9"></div>
<div class="a" style="left:1365px;top:420px;width:46px;height:13px;background:#fff"></div>
<div class="t" style="left:1368px;top:421px;font-size:8.9px;color:#222226;letter-spacing:-0.2px">227.480</div>
<div class="a" style="left:1412px;top:420px;width:8px;height:13px;background:#f6f6f9"></div>
<svg style="left:1413px;top:421px" width="7" height="11"><path d="M1.2 4.2L3.5 1.6L5.8 4.2Z M1.2 6.8L3.5 9.4L5.8 6.8Z" fill="#222"/></svg>
<div class="t" style="left:1306px;top:436px;font-size:8.9px;color:#222226;width:56px;overflow:hidden">Z Target</div>
<div class="a" style="left:1306px;top:448px;width:115px;height:1px;background:#e3e4e9"></div>
<div class="a" style="left:1365px;top:435px;width:46px;height:13px;background:#fff"></div>
<div class="t" style="left:1368px;top:436px;font-size:8.9px;color:#222226;letter-spacing:-0.2px">1.734</div>
<div class="a" style="left:1412px;top:435px;width:8px;height:13px;background:#f6f6f9"></div>
<svg style="left:1413px;top:436px" width="7" height="11"><path d="M1.2 4.2L3.5 1.6L5.8 4.2Z M1.2 6.8L3.5 9.4L5.8 6.8Z" fill="#222"/></svg>
<div class="t" style="left:1306px;top:453px;font-size:8.9px;color:#222226;width:56px;overflow:hidden">Location</div>
<div class="a" style="left:1306px;top:465px;width:115px;height:1px;background:#e3e4e9"></div>
<div class="a" style="left:1365px;top:450px;width:56px;height:16px;background:#f0f0f4;border:1px solid #d0d3e0"></div>
<div class="t" style="left:1365px;top:453px;width:56px;text-align:center;font-size:8.9px;color:#222226">Place...</div>
<div class="t" style="left:1294px;top:472px;font-size:10.4px;color:#4a4b53">Wallpaper</div>
<div class="a" style="left:1294px;top:485px;width:127px;height:1px;background:#e1e2e7"></div>
<div class="t" style="left:1306px;top:490px;font-size:8.9px;color:#222226;width:56px;overflow:hidden">Filename</div>
<div class="a" style="left:1306px;top:502px;width:115px;height:1px;background:#e3e4e9"></div>
<div class="a" style="left:1365px;top:487px;width:37px;height:16px;background:#fff;border:1px solid #dcdde5"></div>
<div class="t" style="left:1367px;top:489px;font-size:8.9px;color:#77797f">(none)</div>
<div class="a" style="left:1402px;top:487px;width:19px;height:16px;background:#f0f0f4;border:1px solid #d0d3e0"></div>
<div class="t" style="left:1402px;top:489px;width:19px;text-align:center;font-size:8.9px;color:#222226">...</div>
<div class="t" style="left:1306px;top:507px;font-size:8.9px;color:#222226;width:56px;overflow:hidden">Show</div>
<div class="a" style="left:1306px;top:519px;width:115px;height:1px;background:#e3e4e9"></div>
<div class="a" style="left:1366px;top:508px;width:9px;height:9px;background:#fff;border:1px solid #d6d8e0"></div>
<svg style="left:1367px;top:509px" width="8" height="8"><path d="M1 4L3 6L7 1" fill="none" stroke="#111" stroke-width="1.3"/></svg>
<div class="t" style="left:1306px;top:522px;font-size:8.9px;color:#222226;width:56px;overflow:hidden">Gray</div>
<div class="a" style="left:1306px;top:534px;width:115px;height:1px;background:#e3e4e9"></div>
<div class="a" style="left:1366px;top:523px;width:9px;height:9px;background:#fff;border:1px solid #d6d8e0"></div>
<svg style="left:1367px;top:524px" width="8" height="8"><path d="M1 4L3 6L7 1" fill="none" stroke="#111" stroke-width="1.3"/></svg>
<!-- viewport tabs strip -->
<div class="a" style="left:52px;top:686px;width:1239px;height:17px;background:#d8d9dd"></div>
<div class="a" style="left:169px;top:688px;width:32px;height:14px;background:#e9eaee;border-radius:0 0 4px 4px;border:1px solid #ced6ee;border-top:none"></div>
<div class="t" style="left:0;top:689px;font-size:8.9px;color:#7a7c85">
<span class="a" style="left:59px">Perspective</span><span class="a" style="left:115px">Top</span><span class="a" style="left:141px">Front</span><span class="a" style="left:174px;color:#232327">Right</span></div>
<svg style="left:206px;top:691px" width="7" height="7" viewBox="0 0 9 9"><path d="M3 0.5H6V3H8.5V6H6V8.5H3V6H0.5V3H3Z" fill="#f4f4f7" stroke="#5c5e66" stroke-width="0.9"/></svg>
<!-- osnap panel -->
<div class="a" style="left:0;top:703px;width:1440px;height:53px;background:#e9eaee"></div>
<div class="a" style="left:15px;top:703px;width:1425px;height:15px;background:#d8d9dd"></div>
<div class="a" style="left:0;top:703px;width:2px;height:38px;background:#d8d9dd"></div>
<div class="a" style="left:2px;top:704px;width:14px;height:37px;background:#e9eaee;border-radius:4px 0 0 4px"></div>
<div class="a" style="left:16px;top:704px;width:41px;height:15px;background:#e9eaee;border-radius:4px 4px 0 0"></div>
<div class="t" style="left:24px;top:705px;font-size:8.9px;color:#232327">Osnap</div>
<div class="t" style="left:64px;top:705px;font-size:8.9px;color:#7a7c85">Selection Filters</div>
<div class="t" style="left:-9px;top:719px;width:36px;text-align:center;font-size:8.9px;color:#7d7f88;transform:rotate(-90deg);transform-origin:50% 50%">Osnap</div>
<svg style="left:1429px;top:705px" width="11" height="11" viewBox="0 0 11 11"><circle cx="5" cy="5.5" r="2.4" fill="none" stroke="#c3c5cc" stroke-width="1.6"/><path d="M5 1.5V9.5M1 5.5H9M2.2 2.7L7.8 8.3M7.8 2.7L2.2 8.3" stroke="#c3c5cc" stroke-width="1.2"/><circle cx="5" cy="5.5" r="1.2" fill="#d8d9dd"/></svg>
<div class="cb" style="left:18px;top:721px"></div>
<svg style="left:19px;top:722px" width="8" height="8"><path d="M1 4.2L3 6.5L7 1.2" fill="none" stroke="#111" stroke-width="1.4"/></svg>
<div class="t" style="left:33px;top:720px;font-size:8.9px;color:#232327">End</div>
<div class="cb" style="left:54px;top:721px"></div>
<div class="t" style="left:68px;top:720px;font-size:8.9px;color:#232327">Near</div>
<div class="cb" style="left:94px;top:721px"></div>
<div class="t" style="left:108px;top:720px;font-size:8.9px;color:#232327">Point</div>
<div class="cb" style="left:136px;top:721px"></div>
<div class="t" style="left:150px;top:720px;font-size:8.9px;color:#232327">Mid</div>
<div class="cb" style="left:173px;top:721px"></div>
<div class="t" style="left:187px;top:720px;font-size:8.9px;color:#232327">Cen</div>
<div class="cb" style="left:210px;top:721px"></div>
<div class="t" style="left:224px;top:720px;font-size:8.9px;color:#232327">Int</div>
<div class="cb" style="left:241px;top:721px"></div>
<div class="t" style="left:255px;top:720px;font-size:8.9px;color:#232327">Perp</div>
<div class="cb" style="left:280px;top:721px"></div>
<div class="t" style="left:295px;top:720px;font-size:8.9px;color:#232327">Tan</div>
<div class="cb" style="left:315px;top:721px"></div>
<div class="t" style="left:329px;top:720px;font-size:8.9px;color:#232327">Quad</div>
<div class="cb" style="left:358px;top:721px"></div>
<div class="t" style="left:372px;top:720px;font-size:8.9px;color:#232327">Knot</div>
<div class="cb" style="left:398px;top:721px"></div>
<div class="t" style="left:412px;top:720px;font-size:8.9px;color:#232327">Vertex</div>
<div class="cb" style="left:442px;top:721px"></div>
<div class="t" style="left:457px;top:720px;font-size:8.9px;color:#232327">Project</div>
<div class="cb" style="left:497px;top:721px"></div>
<div class="t" style="left:511px;top:720px;font-size:8.9px;color:#232327">Disable</div>
<div class="a" style="left:5px;top:744px;width:10px;height:11px;border:1.5px solid #222;background:#fff"></div><div class="a" style="left:6px;top:745px;width:3px;height:9px;background:#222"></div>
<div class="t" style="left:31px;top:744px;font-size:8.9px;color:#3a3b40">CPlane</div>
<div class="t" style="left:86px;top:744px;font-size:8.9px;color:#3a3b40">x 256.678</div>
<div class="t" style="left:155px;top:744px;font-size:8.9px;color:#3a3b40">y 2.163</div>
<div class="t" style="left:228px;top:744px;font-size:8.9px;color:#3a3b40">z 0</div>
<div class="t" style="left:294px;top:744px;font-size:8.9px;color:#3a3b40">Feet</div>
<div class="t" style="left:360px;top:744px;font-size:8.9px;color:#3a3b40">Default</div>
<div class="t" style="left:492px;top:744px;font-size:8.9px;color:#3a3b40">Grid Snap</div>
<div class="t" style="left:668px;top:744px;font-size:8.9px;color:#3a3b40">SmartTrack</div>
<div class="t" style="left:730px;top:744px;font-size:8.9px;color:#3a3b40">Gumball (CPlane)</div>
<div class="t" style="left:828px;top:744px;font-size:8.9px;color:#3a3b40">Auto CPlane (Object)</div>
<div class="t" style="left:930px;top:744px;font-size:8.9px;color:#3a3b40">Record History</div>
<div class="t" style="left:1006px;top:744px;font-size:8.9px;color:#3a3b40">Filter</div>
<div class="t" style="left:1043px;top:744px;font-size:8.9px;color:#3a3b40">Available physical memory: 20701 MB</div>
<div class="a" style="left:343px;top:744px;width:12px;height:13px;background:#000"></div>
<div class="a" style="left:540px;top:742px;width:37px;height:14px;background:#d5dbf1"></div>
<div class="t" style="left:540px;top:744px;width:37px;text-align:center;font-size:8.9px;font-weight:bold;color:#1e2230">Ortho</div>
<div class="a" style="left:579px;top:742px;width:38px;height:14px;background:#d5dbf1"></div>
<div class="t" style="left:579px;top:744px;width:38px;text-align:center;font-size:8.9px;font-weight:bold;color:#1e2230">Planar</div>
<div class="a" style="left:619px;top:742px;width:38px;height:14px;background:#d5dbf1"></div>
<div class="t" style="left:619px;top:744px;width:38px;text-align:center;font-size:8.9px;font-weight:bold;color:#1e2230">Osnap</div>
<svg style="left:814px;top:744px" width="7" height="9" viewBox="0 0 7 9"><rect x="0.5" y="3.5" width="6" height="5" fill="none" stroke="#a2a4ac" stroke-width="1"/><path d="M1.8 3.5V2.2a1.7 1.7 0 0 1 3.4 0V3.5" fill="none" stroke="#a2a4ac" stroke-width="1"/></svg>
<div class="a" style="left:1427px;top:744px;width:10px;height:11px;border:1.5px solid #222;background:#fff"></div><div class="a" style="left:1433px;top:745px;width:3px;height:9px;background:#222"></div>
</div>
</body></html>
